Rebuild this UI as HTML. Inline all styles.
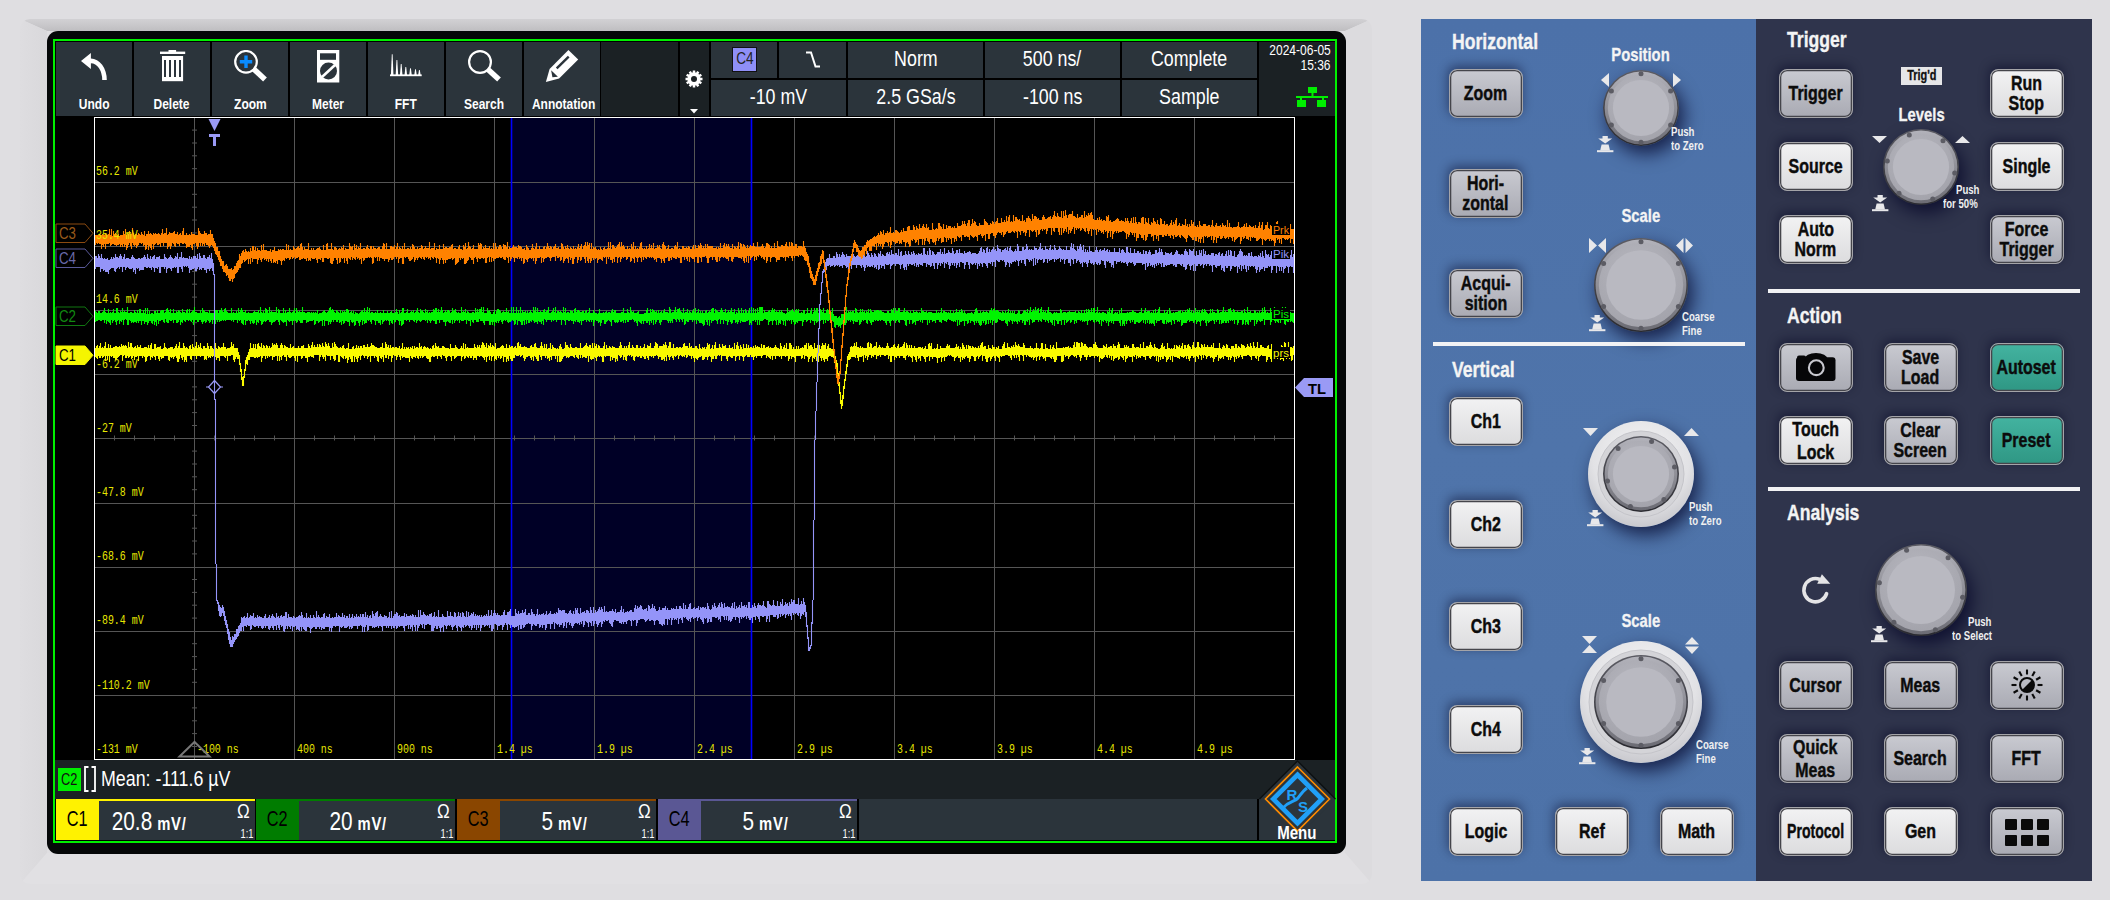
<!DOCTYPE html><html><head><meta charset="utf-8"><style>html,body{margin:0;padding:0;width:2110px;height:900px;overflow:hidden;background:#dfdee1;position:relative}*{box-sizing:border-box}</style></head><body>
<svg style="position:absolute;left:20px;top:19px" width="1352" height="865"><defs><linearGradient id="gt" x1="0" y1="0" x2="0" y2="1"><stop offset="0" stop-color="#d2d1d4"/><stop offset="1" stop-color="#bfbec1"/></linearGradient><linearGradient id="gl" x1="0" y1="0" x2="1" y2="0"><stop offset="0" stop-color="#dedde0"/><stop offset="1" stop-color="#d9d8db"/></linearGradient><clipPath id="fc"><rect width="1352" height="865" rx="10"/></clipPath></defs><g clip-path="url(#fc)"><path d="M0 0H1352L1325 12H27Z" fill="url(#gt)"/><path d="M0 0L27 12V834L0 865Z" fill="url(#gl)"/><path d="M1352 0L1325 12V834L1352 865Z" fill="#dcdbde"/><path d="M0 865L27 834H1325L1352 865Z" fill="#e1e0e3"/></g></svg>
<div style="position:absolute;left:47px;top:31px;width:1299px;height:823px;background:#050708;border-radius:11px;"></div>
<div style="position:absolute;left:53px;top:39px;width:1284px;height:804px;border:2px solid #00f000;background:#000"></div>
<div style="position:absolute;left:56px;top:42px;width:76px;height:74px;background:#2b343b;"></div>
<div style="position:absolute;left:56px;top:95px;width:76px;height:18px;text-align:center;font:bold 15px/18px 'Liberation Sans', sans-serif;color:#fff;white-space:nowrap;"><span style="display:inline-block;transform:scaleX(0.8);transform-origin:50% 50%">Undo</span></div>
<div style="position:absolute;left:134px;top:42px;width:76px;height:74px;background:#2b343b;"></div>
<div style="position:absolute;left:134px;top:95px;width:76px;height:18px;text-align:center;font:bold 15px/18px 'Liberation Sans', sans-serif;color:#fff;white-space:nowrap;"><span style="display:inline-block;transform:scaleX(0.8);transform-origin:50% 50%">Delete</span></div>
<div style="position:absolute;left:212px;top:42px;width:76px;height:74px;background:#2b343b;"></div>
<div style="position:absolute;left:212px;top:95px;width:76px;height:18px;text-align:center;font:bold 15px/18px 'Liberation Sans', sans-serif;color:#fff;white-space:nowrap;"><span style="display:inline-block;transform:scaleX(0.8);transform-origin:50% 50%">Zoom</span></div>
<div style="position:absolute;left:290px;top:42px;width:76px;height:74px;background:#2b343b;"></div>
<div style="position:absolute;left:290px;top:95px;width:76px;height:18px;text-align:center;font:bold 15px/18px 'Liberation Sans', sans-serif;color:#fff;white-space:nowrap;"><span style="display:inline-block;transform:scaleX(0.8);transform-origin:50% 50%">Meter</span></div>
<div style="position:absolute;left:368px;top:42px;width:76px;height:74px;background:#2b343b;"></div>
<div style="position:absolute;left:368px;top:95px;width:76px;height:18px;text-align:center;font:bold 15px/18px 'Liberation Sans', sans-serif;color:#fff;white-space:nowrap;"><span style="display:inline-block;transform:scaleX(0.8);transform-origin:50% 50%">FFT</span></div>
<div style="position:absolute;left:446px;top:42px;width:76px;height:74px;background:#2b343b;"></div>
<div style="position:absolute;left:446px;top:95px;width:76px;height:18px;text-align:center;font:bold 15px/18px 'Liberation Sans', sans-serif;color:#fff;white-space:nowrap;"><span style="display:inline-block;transform:scaleX(0.8);transform-origin:50% 50%">Search</span></div>
<div style="position:absolute;left:524px;top:42px;width:76px;height:74px;background:#2b343b;"></div>
<div style="position:absolute;left:524px;top:95px;width:76px;height:18px;text-align:center;font:bold 15px/18px 'Liberation Sans', sans-serif;color:#fff;white-space:nowrap;"><span style="display:inline-block;transform:scaleX(0.8);transform-origin:50% 50%">Annotation</span></div>
<div style="position:absolute;left:601px;top:42px;width:77px;height:74px;background:#1b2124;"></div>
<div style="position:absolute;left:680px;top:42px;width:29px;height:74px;background:#1b2124;"></div>
<div style="position:absolute;left:711px;top:42px;width:66px;height:36px;background:#2b343b;"></div>
<div style="position:absolute;left:732px;top:47px;width:25px;height:25px;background:#8f8ff7;border:1px solid #111;"></div>
<div style="position:absolute;left:732px;top:47px;width:25px;height:24px;text-align:center;font:normal 17px/24px 'Liberation Sans', sans-serif;color:#222;white-space:nowrap;"><span style="display:inline-block;transform:scaleX(0.8);transform-origin:50% 50%">C4</span></div>
<div style="position:absolute;left:779px;top:42px;width:67px;height:36px;background:#2b343b;"></div>
<svg style="position:absolute;left:805px;top:51px" width="16" height="18"><path d="M1 1.5H6L10.5 15.5H15" fill="none" stroke="#fff" stroke-width="2"/></svg>
<div style="position:absolute;left:848px;top:42px;width:135px;height:36px;background:#2b343b;"></div>
<div style="position:absolute;left:848px;top:45px;width:135px;height:28px;text-align:center;font:normal 22px/28px 'Liberation Sans', sans-serif;color:#fff;white-space:nowrap;"><span style="display:inline-block;transform:scaleX(0.81);transform-origin:50% 50%">Norm</span></div>
<div style="position:absolute;left:985px;top:42px;width:135px;height:36px;background:#2b343b;"></div>
<div style="position:absolute;left:985px;top:45px;width:135px;height:28px;text-align:center;font:normal 22px/28px 'Liberation Sans', sans-serif;color:#fff;white-space:nowrap;"><span style="display:inline-block;transform:scaleX(0.81);transform-origin:50% 50%">500 ns/</span></div>
<div style="position:absolute;left:1122px;top:42px;width:135px;height:36px;background:#2b343b;"></div>
<div style="position:absolute;left:1122px;top:45px;width:135px;height:28px;text-align:center;font:normal 22px/28px 'Liberation Sans', sans-serif;color:#fff;white-space:nowrap;"><span style="display:inline-block;transform:scaleX(0.81);transform-origin:50% 50%">Complete</span></div>
<div style="position:absolute;left:711px;top:80px;width:135px;height:36px;background:#2b343b;"></div>
<div style="position:absolute;left:711px;top:83px;width:135px;height:28px;text-align:center;font:normal 22px/28px 'Liberation Sans', sans-serif;color:#fff;white-space:nowrap;"><span style="display:inline-block;transform:scaleX(0.81);transform-origin:50% 50%">-10 mV</span></div>
<div style="position:absolute;left:848px;top:80px;width:135px;height:36px;background:#2b343b;"></div>
<div style="position:absolute;left:848px;top:83px;width:135px;height:28px;text-align:center;font:normal 22px/28px 'Liberation Sans', sans-serif;color:#fff;white-space:nowrap;"><span style="display:inline-block;transform:scaleX(0.81);transform-origin:50% 50%">2.5 GSa/s</span></div>
<div style="position:absolute;left:985px;top:80px;width:135px;height:36px;background:#2b343b;"></div>
<div style="position:absolute;left:985px;top:83px;width:135px;height:28px;text-align:center;font:normal 22px/28px 'Liberation Sans', sans-serif;color:#fff;white-space:nowrap;"><span style="display:inline-block;transform:scaleX(0.81);transform-origin:50% 50%">-100 ns</span></div>
<div style="position:absolute;left:1122px;top:80px;width:135px;height:36px;background:#2b343b;"></div>
<div style="position:absolute;left:1122px;top:83px;width:135px;height:28px;text-align:center;font:normal 22px/28px 'Liberation Sans', sans-serif;color:#fff;white-space:nowrap;"><span style="display:inline-block;transform:scaleX(0.81);transform-origin:50% 50%">Sample</span></div>
<div style="position:absolute;left:1259px;top:42px;width:76px;height:74px;background:#1b2124;"></div>
<div style="position:absolute;right:779px;top:41px;font:normal 15px/18px 'Liberation Sans', sans-serif;color:#fff;white-space:nowrap;transform:scaleX(0.8);transform-origin:100% 50%;">2024-06-05</div>
<div style="position:absolute;right:779px;top:56px;font:normal 15px/18px 'Liberation Sans', sans-serif;color:#fff;white-space:nowrap;transform:scaleX(0.8);transform-origin:100% 50%;">15:36</div>
<svg style="position:absolute;left:1296px;top:87px" width="33" height="21"><g fill="#00ee00"><rect x="12" y="0" width="9" height="6"/><rect x="15.5" y="5" width="2" height="5"/><rect x="0" y="9" width="32" height="2"/><rect x="4" y="10" width="2" height="4"/><rect x="26" y="10" width="2" height="4"/><rect x="1" y="13" width="9" height="7"/><rect x="21" y="13" width="9" height="7"/></g></svg>
<svg style="position:absolute;left:685.4px;top:69.8px" width="18" height="18" viewBox="-9 -9 18 18"><g fill="#fff"><circle r="6.7"/><rect x="-1.25" y="-8.5" width="2.5" height="3.5" transform="rotate(0)"/><rect x="-1.25" y="-8.5" width="2.5" height="3.5" transform="rotate(30)"/><rect x="-1.25" y="-8.5" width="2.5" height="3.5" transform="rotate(60)"/><rect x="-1.25" y="-8.5" width="2.5" height="3.5" transform="rotate(90)"/><rect x="-1.25" y="-8.5" width="2.5" height="3.5" transform="rotate(120)"/><rect x="-1.25" y="-8.5" width="2.5" height="3.5" transform="rotate(150)"/><rect x="-1.25" y="-8.5" width="2.5" height="3.5" transform="rotate(180)"/><rect x="-1.25" y="-8.5" width="2.5" height="3.5" transform="rotate(210)"/><rect x="-1.25" y="-8.5" width="2.5" height="3.5" transform="rotate(240)"/><rect x="-1.25" y="-8.5" width="2.5" height="3.5" transform="rotate(270)"/><rect x="-1.25" y="-8.5" width="2.5" height="3.5" transform="rotate(300)"/><rect x="-1.25" y="-8.5" width="2.5" height="3.5" transform="rotate(330)"/></g><circle r="3" fill="#1b2124"/></svg>
<svg style="position:absolute;left:690.4px;top:108.6px" width="9" height="5"><path d="M0 0H8L4 4.6Z" fill="#fff"/></svg>
<svg style="position:absolute;left:80px;top:52px" width="30" height="30"><path d="M1 9L10.9 1V6.6A15.9 21.4 0 0 1 26.8 28L22.2 28A11.3 16.8 0 0 0 10.9 11.2V16.9Z" fill="#fff"/></svg>
<svg style="position:absolute;left:159px;top:49px" width="28" height="34"><rect x="1" y="2.6" width="25.2" height="2.4" fill="#fff"/><rect x="9.5" y="1" width="7.6" height="2.5" fill="#fff"/><path d="M3 7H24.1V32.2H3Z" fill="#fff"/><g fill="#2b343b"><rect x="5" y="11" width="2" height="17"/><rect x="10" y="11" width="2" height="17"/><rect x="15" y="11" width="2" height="17"/><rect x="20" y="11" width="2" height="17"/></g></svg>
<svg style="position:absolute;left:234px;top:50px" width="34" height="34"><circle cx="12" cy="11.8" r="10.8" fill="none" stroke="#fff" stroke-width="2.2"/><path d="M19.5 18.8L31 29.5" stroke="#fff" stroke-width="5.5"/><path d="M12 5.6V18M5.8 11.8H18.2" stroke="#0a8cff" stroke-width="3.4"/></svg>
<svg style="position:absolute;left:317px;top:50px" width="24" height="33"><path d="M0 0H22.3V32.5H0Z" fill="#fff"/><rect x="3" y="3.3" width="16" height="6.5" fill="#2b343b"/><circle cx="11.5" cy="21" r="8.5" fill="#2b343b"/><path d="M5 27L18 15" stroke="#fff" stroke-width="2.6"/></svg>
<svg style="position:absolute;left:388px;top:50px" width="36" height="28"><g fill="#fff"><path d="M2.9 25.5L3.8 4.3H4.6L5.5 25.5Z"/><path d="M7.6 25.5L8.5 9.9H9.3L10.2 25.5Z"/><path d="M11.9 25.5L12.8 13.9H13.6L14.5 25.5Z"/><path d="M16.5 25.5L17.4 16.9H18.2L19.1 25.5Z"/><path d="M21.2 25.5L22.1 18.2H22.9L23.8 25.5Z"/><path d="M26.2 25.5L27.1 19.2H27.9L28.8 25.5Z"/><path d="M30.1 25.5L31.0 19.9H31.8L32.7 25.5Z"/><rect x="2" y="24.4" width="31.7" height="1.8"/></g></svg>
<svg style="position:absolute;left:468px;top:50px" width="34" height="34"><circle cx="12" cy="12" r="10.9" fill="none" stroke="#fff" stroke-width="2.2"/><path d="M19.5 19L31 29.5" stroke="#fff" stroke-width="5.5"/></svg>
<svg style="position:absolute;left:545px;top:49px" width="35" height="35"><path d="M0.9 33L4.6 20L23.4 0.9L33.2 10.5L14.1 29.6Z" fill="#fff"/><path d="M11.7 19.4L23.7 7.7" stroke="#2b343b" stroke-width="2.4"/><path d="M6.1 21.3L12.9 27.7L7.4 28.3Z" fill="#2b343b"/></svg>
<svg style="position:absolute;left:0;top:0" width="2110" height="900" viewBox="0 0 2110 900">
<defs><clipPath id="pc"><rect x="95" y="118" width="1199" height="641"/></clipPath></defs>
<rect x="511" y="118" width="240" height="641" fill="#000026"/>
<path d="M194.5 118V759M294.5 118V759M394.5 118V759M494.5 118V759M594.5 118V759M694.5 118V759M794.5 118V759M894.5 118V759M994.5 118V759M1094.5 118V759M1194.5 118V759M95 182.5H1294M95 246.5H1294M95 310.5H1294M95 374.5H1294M95 438.5H1294M95 503.5H1294M95 567.5H1294M95 631.5H1294M95 695.5H1294M192 130.1H197M192 143.0H197M192 155.8H197M192 168.7H197M192 194.3H197M192 207.2H197M192 220.0H197M192 232.9H197M192 258.5H197M192 271.4H197M192 284.2H197M192 297.1H197M192 322.7H197M192 335.6H197M192 348.4H197M192 361.3H197M192 386.9H197M192 399.8H197M192 412.6H197M192 425.5H197M192 451.1H197M192 464.0H197M192 476.8H197M192 489.7H197M192 515.3H197M192 528.2H197M192 541.0H197M192 553.9H197M192 579.5H197M192 592.4H197M192 605.2H197M192 618.1H197M192 643.7H197M192 656.6H197M192 669.4H197M192 682.3H197M192 707.9H197M192 720.8H197M192 733.6H197M192 746.5H197M114.5 435.5V440.5M134.5 435.5V440.5M154.5 435.5V440.5M174.5 435.5V440.5M214.5 435.5V440.5M234.5 435.5V440.5M254.5 435.5V440.5M274.5 435.5V440.5M314.5 435.5V440.5M334.5 435.5V440.5M354.5 435.5V440.5M374.5 435.5V440.5M414.5 435.5V440.5M434.5 435.5V440.5M454.5 435.5V440.5M474.5 435.5V440.5M514.5 435.5V440.5M534.5 435.5V440.5M554.5 435.5V440.5M574.5 435.5V440.5M614.5 435.5V440.5M634.5 435.5V440.5M654.5 435.5V440.5M674.5 435.5V440.5M714.5 435.5V440.5M734.5 435.5V440.5M754.5 435.5V440.5M774.5 435.5V440.5M814.5 435.5V440.5M834.5 435.5V440.5M854.5 435.5V440.5M874.5 435.5V440.5M914.5 435.5V440.5M934.5 435.5V440.5M954.5 435.5V440.5M974.5 435.5V440.5M1014.5 435.5V440.5M1034.5 435.5V440.5M1054.5 435.5V440.5M1074.5 435.5V440.5M1114.5 435.5V440.5M1134.5 435.5V440.5M1154.5 435.5V440.5M1174.5 435.5V440.5M1214.5 435.5V440.5M1234.5 435.5V440.5M1254.5 435.5V440.5M1274.5 435.5V440.5" stroke="#555555" stroke-width="1" fill="none"/>
<path d="M511.5 118V759M751.5 118V759" stroke="#0000ff" stroke-width="1.6"/>
<rect x="94.5" y="117.5" width="1200" height="642" fill="none" stroke="#fff" stroke-width="1"/>
<g clip-path="url(#pc)">
<path d="M95.5 348v9m1 -11v12m1 -13v14m1 -11v8m1 -10v12m1 -15v15m1 -10v8m1 -9v11m1 -10v9m1 -11v10m1 -14v19m1 -13v8m1 -8v12m1 -16v12m1 -8v14m1 -17v11m1 -8v9m1 -9v8m1 -9v11m1 -11v11m1 -12v14m1 -14v14m1 -13v11m1 -11v10m1 -11v10m1 -9v8m1 -11v11m1 -9v15m1 -16v11m1 -10v9m1 -10v13m1 -12v12m1 -10v8m1 -14v16m1 -11v10m1 -14v13m1 -13v16m1 -12v11m1 -10v8m1 -9v13m1 -14v11m1 -9v9m1 -12v11m1 -9v14m1 -14v9m1 -11v11m1 -8v8m1 -8v10m1 -10v8m1 -9v10m1 -10v15m1 -15v14m1 -13v9m1 -12v11m1 -8v8m1 -11v15m1 -17v14m1 -8v9m1 -9v7m1 -12v13m1 -13v16m1 -12v8m1 -9v9m1 -9v12m1 -12v14m1 -15v11m1 -8v10m1 -10v9m1 -10v10m1 -15v13m1 -9v9m1 -8v8m1 -7v7m1 -8v12m1 -12v13m1 -14v10m1 -10v11m1 -11v10m1 -8v10m1 -11v9m1 -11v10m1 -12v14m1 -10v14m1 -16v16m1 -20v17m1 -11v7m1 -7v10m1 -10v12m1 -17v14m1 -11v16m1 -14v12m1 -13v15m1 -14v8m1 -7v7m1 -10v10m1 -11v14m1 -10v11m1 -16v12m1 -9v9m1 -8v8m1 -10v10m1 -14v17m1 -11v8m1 -11v11m1 -9v9m1 -13v14m1 -9v8m1 -7v7m1 -10v10m1 -10v14m1 -12v11m1 -11v12m1 -17v13m1 -10v12m1 -9v8m1 -11v12m1 -12v10m1 -8v9m1 -8v7m1 -9v9m1 -13v14m1 -9v12m1 -11v9m1 -12v12m1 -11v14m1 -13v8m1 -9v9m1 -9v9m1 -13v13m1 -9v10m1 -10v11m1 -9v7m1 -8v13m1 -13v8m1 -8v8m1 -9v9m1 -14v13m1 -9v9m1 -11v16m1 -12v14m1 -14v11m1 -11v9m1 -9v11m1 -7v7m1 -4v10m1 -2v9m1 -3v11m1 -3v9m1 -10v10m1 -17v9m1 -18v11m1 -14v7m1 -9v10m1 -13v8m1 -11v11m1 -17v14m1 -9v9m1 -9v9m1 -13v13m1 -9v10m1 -14v14m1 -9v8m1 -13v14m1 -15v14m1 -11v11m1 -10v9m1 -13v19m1 -14v10m1 -13v11m1 -10v10m1 -8v11m1 -14v11m1 -10v12m1 -10v8m1 -10v11m1 -9v8m1 -9v9m1 -13v17m1 -15v12m1 -13v13m1 -12v11m1 -13v13m1 -11v16m1 -13v8m1 -8v13m1 -16v12m1 -14v17m1 -15v11m1 -8v7m1 -10v12m1 -11v11m1 -10v14m1 -14v8m1 -7v9m1 -9v10m1 -14v14m1 -10v9m1 -10v9m1 -10v10m1 -8v10m1 -10v13m1 -13v8m1 -8v14m1 -16v10m1 -8v8m1 -8v8m1 -10v13m1 -13v12m1 -13v11m1 -8v8m1 -8v10m1 -10v10m1 -10v14m1 -18v13m1 -11v11m1 -9v8m1 -11v12m1 -15v15m1 -10v11m1 -13v10m1 -8v8m1 -8v8m1 -11v11m1 -8v8m1 -11v17m1 -16v12m1 -10v8m1 -12v14m1 -11v13m1 -12v10m1 -15v19m1 -17v11m1 -9v10m1 -13v13m1 -10v10m1 -8v12m1 -12v8m1 -13v13m1 -9v12m1 -17v19m1 -17v16m1 -14v9m1 -8v8m1 -7v14m1 -14v14m1 -15v9m1 -8v9m1 -11v12m1 -13v14m1 -11v8m1 -7v10m1 -11v10m1 -10v15m1 -20v17m1 -11v8m1 -8v10m1 -10v13m1 -15v15m1 -16v10m1 -7v13m1 -14v9m1 -12v14m1 -11v14m1 -16v12m1 -10v8m1 -10v14m1 -14v10m1 -8v7m1 -10v11m1 -11v13m1 -11v9m1 -9v9m1 -12v15m1 -12v10m1 -10v9m1 -10v16m1 -19v13m1 -11v11m1 -11v11m1 -10v12m1 -11v9m1 -9v10m1 -9v13m1 -13v14m1 -14v8m1 -9v11m1 -11v12m1 -16v14m1 -9v14m1 -14v7m1 -13v16m1 -14v14m1 -11v8m1 -10v14m1 -11v8m1 -11v11m1 -8v14m1 -15v11m1 -11v8m1 -7v8m1 -9v9m1 -9v13m1 -12v9m1 -9v7m1 -9v11m1 -8v11m1 -12v8m1 -13v15m1 -9v8m1 -10v10m1 -8v9m1 -11v11m1 -10v10m1 -11v11m1 -9v13m1 -15v9m1 -8v10m1 -12v13m1 -10v8m1 -11v11m1 -9v10m1 -11v9m1 -9v11m1 -10v11m1 -16v13m1 -9v11m1 -12v10m1 -7v9m1 -11v10m1 -11v10m1 -9v9m1 -8v10m1 -11v12m1 -11v11m1 -10v13m1 -14v14m1 -13v8m1 -11v10m1 -11v12m1 -9v9m1 -14v13m1 -10v10m1 -9v12m1 -13v10m1 -8v8m1 -8v9m1 -9v11m1 -13v9m1 -9v10m1 -9v9m1 -8v10m1 -10v13m1 -13v9m1 -9v8m1 -7v7m1 -12v13m1 -9v13m1 -13v8m1 -8v8m1 -8v11m1 -14v13m1 -11v10m1 -9v8m1 -7v7m1 -7v7m1 -8v8m1 -10v15m1 -13v9m1 -14v13m1 -7v10m1 -15v14m1 -10v8m1 -9v10m1 -9v10m1 -10v8m1 -8v10m1 -10v10m1 -10v8m1 -8v12m1 -16v14m1 -11v11m1 -10v12m1 -15v11m1 -9v9m1 -11v12m1 -9v8m1 -11v11m1 -14v15m1 -14v15m1 -13v15m1 -13v10m1 -14v19m1 -14v9m1 -12v11m1 -10v14m1 -17v13m1 -9v14m1 -16v12m1 -11v10m1 -9v14m1 -18v16m1 -10v11m1 -12v8m1 -8v10m1 -10v8m1 -9v12m1 -13v12m1 -13v11m1 -10v16m1 -14v9m1 -9v9m1 -13v18m1 -14v11m1 -11v13m1 -16v11m1 -9v12m1 -13v15m1 -15v15m1 -13v10m1 -11v11m1 -12v9m1 -7v8m1 -13v13m1 -14v14m1 -10v9m1 -11v13m1 -10v9m1 -9v8m1 -8v11m1 -12v15m1 -14v12m1 -12v10m1 -9v9m1 -9v8m1 -8v8m1 -10v12m1 -13v15m1 -13v10m1 -10v14m1 -17v12m1 -13v14m1 -10v12m1 -11v13m1 -13v13m1 -13v7m1 -9v11m1 -15v18m1 -14v10m1 -8v8m1 -12v12m1 -8v10m1 -14v12m1 -7v10m1 -11v10m1 -10v13m1 -18v14m1 -8v11m1 -15v11m1 -9v9m1 -8v8m1 -8v11m1 -10v7m1 -8v14m1 -13v7m1 -10v16m1 -18v18m1 -15v14m1 -12v10m1 -10v8m1 -9v8m1 -14v14m1 -11v13m1 -13v12m1 -10v11m1 -10v9m1 -13v12m1 -9v9m1 -8v8m1 -8v9m1 -9v10m1 -11v8m1 -8v10m1 -9v10m1 -10v11m1 -11v7m1 -12v15m1 -10v7m1 -7v10m1 -11v10m1 -11v11m1 -12v13m1 -15v15m1 -12v10m1 -9v15m1 -17v11m1 -11v14m1 -11v12m1 -17v16m1 -11v11m1 -16v14m1 -11v12m1 -14v17m1 -13v9m1 -12v11m1 -10v11m1 -9v8m1 -8v9m1 -9v14m1 -16v16m1 -20v14m1 -7v8m1 -12v11m1 -8v8m1 -8v8m1 -10v10m1 -9v14m1 -13v9m1 -11v14m1 -13v11m1 -11v11m1 -10v14m1 -14v11m1 -11v13m1 -13v7m1 -9v10m1 -14v16m1 -13v12m1 -9v7m1 -7v12m1 -14v11m1 -9v12m1 -14v15m1 -13v8m1 -11v10m1 -13v14m1 -8v7m1 -7v9m1 -12v11m1 -9v13m1 -12v13m1 -13v9m1 -12v11m1 -11v12m1 -9v9m1 -9v8m1 -10v12m1 -10v10m1 -10v8m1 -9v10m1 -13v15m1 -11v11m1 -11v8m1 -11v13m1 -12v14m1 -14v10m1 -13v13m1 -8v9m1 -9v8m1 -8v10m1 -12v10m1 -14v14m1 -13v12m1 -11v12m1 -8v11m1 -13v11m1 -11v11m1 -11v14m1 -14v14m1 -16v15m1 -14v16m1 -19v15m1 -12v16m1 -13v7m1 -9v11m1 -15v18m1 -18v15m1 -9v8m1 -8v10m1 -14v16m1 -12v8m1 -8v9m1 -10v9m1 -9v8m1 -7v11m1 -12v9m1 -9v8m1 -7v8m1 -9v10m1 -13v12m1 -13v14m1 -11v9m1 -9v12m1 -12v11m1 -9v7m1 -12v13m1 -9v9m1 -10v13m1 -11v8m1 -8v10m1 -10v14m1 -16v12m1 -12v13m1 -11v12m1 -11v9m1 -14v13m1 -9v9m1 -8v7m1 -9v13m1 -12v12m1 -13v12m1 -10v8m1 -10v10m1 -14v17m1 -15v12m1 -13v12m1 -7v8m1 -9v14m1 -17v14m1 -10v10m1 -14v11m1 -14v17m1 -11v11m1 -11v8m1 -8v7m1 -11v12m1 -9v8m1 -7v13m1 -17v12m1 -10v10m1 -10v10m1 -11v11m1 -8v11m1 -11v13m1 -13v9m1 -12v11m1 -8v9m1 -9v10m1 -11v11m1 -9v7m1 -13v13m1 -7v12m1 -16v12m1 -15v14m1 -10v10m1 -7v11m1 -15v11m1 -9v9m1 -7v8m1 -13v17m1 -13v9m1 -9v8m1 -12v11m1 -7v9m1 -12v12m1 -9v9m1 -10v8m1 -8v10m1 -9v9m1 -11v14m1 -12v9m1 -12v11m1 -9v11m1 -12v10m1 -9v9m1 -9v9m1 -8v8m1 -12v14m1 -10v8m1 -11v10m1 -10v10m1 -7v7m1 -8v11m1 -11v9m1 -10v11m1 -9v10m1 -11v12m1 -11v8m1 -8v12m1 -12v8m1 -9v9m1 -11v14m1 -12v9m1 -8v8m1 -8v8m1 -7v8m1 -14v13m1 -10v13m1 -10v7m1 -9v9m1 -11v11m1 -8v9m1 -14v13m1 -7v7m1 -7v12m1 -18v16m1 -16v13m1 -11v14m1 -10v8m1 -10v10m1 -8v9m1 -9v13m1 -16v10m1 -7v7m1 -10v10m1 -7v7m1 -8v8m1 -8v11m1 -12v11m1 -10v7m1 -10v14m1 -14v11m1 -13v13m1 -7v8m1 -14v19m1 -16v13m1 -14v12m1 -12v11m1 -9v15m1 -13v9m1 -15v16m1 -11v9m1 -9v13m1 -16v12m1 -14v19m1 -17v11m1 -7v9m1 -12v15m1 -18v15m1 -13v15m1 -15v17m1 -19v16m1 -10v10m1 -13v15m1 -17v13m1 -9v8m1 -8v8m1 -7v8m1 -8v8m1 -7v8m1 -8v13m1 -7v8m1 -4v8m1 -5v13m1 -3v13m1 -4v12m1 -2v12m1 -4v9m1 -14v11m1 -20v13m1 -20v10m1 -18v10m1 -17v10m1 -18v11m1 -13v6m1 -8v8m1 -13v12m1 -13v11m1 -10v10m1 -11v11m1 -14v14m1 -11v12m1 -16v13m1 -8v11m1 -11v14m1 -13v9m1 -11v11m1 -9v9m1 -10v9m1 -8v14m1 -14v7m1 -7v10m1 -10v8m1 -13v17m1 -18v15m1 -10v8m1 -12v12m1 -11v14m1 -10v8m1 -9v10m1 -11v9m1 -9v9m1 -13v17m1 -11v8m1 -9v9m1 -11v10m1 -8v10m1 -9v7m1 -8v8m1 -7v7m1 -7v8m1 -8v8m1 -10v9m1 -12v12m1 -9v13m1 -11v8m1 -8v14m1 -15v15m1 -15v9m1 -11v11m1 -12v16m1 -13v10m1 -9v10m1 -12v10m1 -12v12m1 -8v10m1 -11v9m1 -9v9m1 -10v10m1 -12v14m1 -16v16m1 -10v12m1 -17v13m1 -11v10m1 -7v9m1 -12v11m1 -8v9m1 -12v13m1 -10v14m1 -14v8m1 -10v11m1 -9v12m1 -12v14m1 -14v8m1 -9v12m1 -12v11m1 -11v14m1 -13v8m1 -9v9m1 -7v8m1 -9v11m1 -13v16m1 -13v8m1 -8v8m1 -13v12m1 -13v18m1 -15v11m1 -14v14m1 -8v10m1 -10v8m1 -9v9m1 -8v8m1 -9v10m1 -14v19m1 -14v9m1 -9v9m1 -12v11m1 -9v14m1 -14v10m1 -10v9m1 -9v13m1 -13v9m1 -11v11m1 -13v12m1 -10v9m1 -10v11m1 -8v7m1 -7v8m1 -8v9m1 -9v9m1 -9v13m1 -14v11m1 -14v13m1 -10v9m1 -10v12m1 -9v9m1 -11v15m1 -13v8m1 -14v17m1 -15v13m1 -11v12m1 -10v8m1 -12v11m1 -7v9m1 -13v13m1 -12v16m1 -16v13m1 -11v8m1 -10v10m1 -9v10m1 -9v13m1 -14v14m1 -13v9m1 -9v8m1 -10v13m1 -11v9m1 -12v11m1 -13v12m1 -13v19m1 -14v9m1 -10v10m1 -10v13m1 -10v13m1 -13v13m1 -17v13m1 -10v9m1 -9v13m1 -12v10m1 -14v12m1 -10v9m1 -9v11m1 -9v12m1 -14v9m1 -8v9m1 -11v12m1 -9v13m1 -13v7m1 -7v8m1 -11v10m1 -12v12m1 -14v14m1 -8v7m1 -7v7m1 -12v12m1 -8v9m1 -9v9m1 -8v10m1 -12v14m1 -13v8m1 -10v11m1 -9v11m1 -16v13m1 -10v13m1 -12v9m1 -11v13m1 -11v15m1 -14v8m1 -8v8m1 -8v9m1 -13v18m1 -16v10m1 -7v7m1 -7v9m1 -9v7m1 -7v8m1 -8v9m1 -11v11m1 -9v10m1 -10v9m1 -8v11m1 -12v10m1 -10v9m1 -14v18m1 -13v9m1 -9v8m1 -7v11m1 -12v9m1 -14v13m1 -13v14m1 -8v10m1 -10v9m1 -14v17m1 -13v9m1 -9v9m1 -8v8m1 -8v8m1 -12v13m1 -9v10m1 -12v10m1 -12v14m1 -11v14m1 -13v13m1 -20v18m1 -12v8m1 -8v8m1 -8v8m1 -8v8m1 -8v14m1 -14v14m1 -15v14m1 -13v7m1 -8v10m1 -10v9m1 -9v9m1 -10v13m1 -11v9m1 -10v9m1 -8v7m1 -7v7m1 -10v11m1 -14v15m1 -10v9m1 -14v16m1 -16v13m1 -12v12m1 -12v14m1 -10v14m1 -19v16m1 -15v12m1 -9v9m1 -11v13m1 -13v13m1 -11v14m1 -13v10m1 -9v7m1 -8v10m1 -10v10m1 -10v9m1 -8v8m1 -12v12m1 -12v14m1 -16v14m1 -11v11m1 -9v10m1 -9v8m1 -8v14m1 -14v10m1 -10v11m1 -11v11m1 -14v13m1 -12v11m1 -10v8m1 -11v13m1 -9v10m1 -11v8m1 -8v11m1 -12v10m1 -10v14m1 -12v8m1 -12v17m1 -15v13m1 -13v12m1 -10v10m1 -13v12m1 -15v18m1 -16v15m1 -11v8m1 -8v9m1 -9v10m1 -10v12m1 -15v11m1 -9v15m1 -17v14m1 -12v11m1 -12v10m1 -8v9m1 -9v9m1 -9v9m1 -13v18m1 -18v12m1 -9v10m1 -9v7m1 -8v12m1 -12v9m1 -9v11m1 -10v9m1 -13v14m1 -10v8m1 -8v8m1 -14v15m1 -9v9m1 -9v12m1 -14v10m1 -10v10m1 -9v9m1 -11v13m1 -16v17m1 -14v12m1 -10v9m1 -8v8m1 -12v13m1 -10v9m1 -8v13m1 -13v8m1 -7v13m1 -13v8m1 -9v12m1 -15v12m1 -14v16m1 -12v12m1 -13v10m1 -7v8m1 -8v13m1 -19v17m1 -12v11m1 -11v9m1 -8v11m1 -12v8m1 -7v13m1 -14v8m1 -11v12m1 -8v8m1 -12v12m1 -11v12m1 -11v11m1 -13v14m1 -11v8m1 -10v11m1 -14v14m1 -8v9m1 -13v12m1 -12v11m1 -8v11m1 -14v11m1 -12v15m1 -13v15m1 -14v11m1 -9v7m1 -11v11m1 -14v16m1 -11v10m1 -9v14m1 -15v9m1 -14v15m1 -15v17m1 -12v8m1 -7v8m1 -12v16m1 -15v10m1 -8v11m1 -14v11m1 -8v9m1 -9v12m1 -14v12m1 -10v9m1 -9v9m1 -9v11m1 -13v12m1 -10v11m1 -15v19m1 -14v11m1 -11v9m1 -9v9m1 -9v7m1 -7v13m1 -18v15m1 -10v11m1 -10v9m1 -11v10m1 -12v14m1 -13v10m1 -8v8m1 -12v13m1 -12v12m1 -9v12m1 -12v9m1 -8v11m1 -14v12m1 -12v10m1 -10v11m1 -9v14m1 -18v13m1 -13v15m1 -11v8m1 -10v12m1 -11v10m1 -9v7m1 -11v13m1 -12v14m1 -14v11m1 -10v10m1 -8v8m1 -9v9m1 -12v11m1 -9v9m1 -8v9m1 -13v14m1 -11v14m1 -12v8m1 -14v14m1 -10v10m1 -8v10m1 -11v12m1 -17v14m1 -8v13m1 -13v9m1 -12v11m1 -11v10m1 -8v9m1 -9v9m1 -8v8m1 -8v8m1 -8v14m1 -16v14m1 -15v12m1 -8v8m1 -8v10m1 -15v18m1 -13v7m1 -8v10m1 -11v9m1 -8v9m1 -9v8m1 -9v12m1 -11v8m1 -7v7m1 -9v13m1 -15v14m1 -13v13m1 -11v13m1 -19v13m1 -12v12m1 -8v12m1 -12v9m1 -14v15m1 -10v12m1 -12v9m1 -9v14m1 -13v12m1 -14v9" stroke="#fafa00" stroke-width="1.08" fill="none"/>
<path d="M95.5 311v11m1 -10v9m1 -8v8m1 -10v9m1 -9v9m1 -7v8m1 -8v8m1 -9v8m1 -9v9m1 -12v15m1 -11v8m1 -7v11m1 -11v8m1 -12v13m1 -9v10m1 -11v13m1 -12v7m1 -8v11m1 -14v12m1 -8v7m1 -7v9m1 -14v17m1 -17v13m1 -9v8m1 -7v11m1 -13v10m1 -9v10m1 -14v12m1 -8v13m1 -14v9m1 -8v7m1 -7v8m1 -13v18m1 -12v12m1 -12v7m1 -8v9m1 -9v11m1 -10v9m1 -9v10m1 -13v12m1 -10v10m1 -9v10m1 -13v11m1 -8v10m1 -14v12m1 -12v12m1 -8v12m1 -12v8m1 -11v11m1 -8v11m1 -16v14m1 -8v8m1 -14v17m1 -11v9m1 -12v10m1 -7v7m1 -8v10m1 -10v11m1 -10v7m1 -10v14m1 -14v11m1 -9v13m1 -16v10m1 -7v11m1 -11v8m1 -10v10m1 -11v10m1 -10v10m1 -10v12m1 -9v10m1 -11v7m1 -10v13m1 -14v15m1 -13v13m1 -11v8m1 -11v12m1 -8v8m1 -8v7m1 -11v14m1 -10v7m1 -7v7m1 -9v12m1 -11v11m1 -13v12m1 -11v9m1 -8v13m1 -12v9m1 -13v14m1 -11v8m1 -8v9m1 -8v9m1 -12v10m1 -11v11m1 -7v8m1 -12v11m1 -7v8m1 -9v10m1 -11v9m1 -10v15m1 -18v15m1 -10v8m1 -8v8m1 -7v9m1 -9v9m1 -9v7m1 -10v10m1 -7v9m1 -14v16m1 -14v12m1 -11v10m1 -9v11m1 -11v10m1 -10v8m1 -7v8m1 -11v13m1 -10v9m1 -9v7m1 -7v11m1 -11v7m1 -9v12m1 -13v14m1 -14v10m1 -10v12m1 -9v7m1 -10v12m1 -12v11m1 -13v13m1 -10v9m1 -8v9m1 -12v11m1 -12v13m1 -10v9m1 -8v8m1 -7v7m1 -7v7m1 -7v7m1 -12v13m1 -8v7m1 -8v10m1 -9v7m1 -7v7m1 -9v9m1 -7v10m1 -15v12m1 -8v9m1 -11v10m1 -12v15m1 -13v14m1 -12v13m1 -13v8m1 -10v15m1 -12v8m1 -8v8m1 -9v8m1 -7v8m1 -8v11m1 -11v8m1 -8v10m1 -11v12m1 -13v12m1 -11v8m1 -8v13m1 -13v10m1 -12v13m1 -10v7m1 -13v14m1 -9v13m1 -12v11m1 -13v11m1 -9v8m1 -13v14m1 -13v12m1 -11v10m1 -7v7m1 -13v15m1 -10v10m1 -11v14m1 -13v11m1 -11v10m1 -10v10m1 -10v9m1 -14v13m1 -7v7m1 -11v13m1 -12v15m1 -12v7m1 -7v8m1 -8v9m1 -14v15m1 -10v9m1 -12v12m1 -9v13m1 -14v8m1 -8v9m1 -13v14m1 -10v9m1 -8v8m1 -9v13m1 -14v10m1 -13v12m1 -7v8m1 -13v15m1 -12v11m1 -10v8m1 -9v10m1 -9v11m1 -11v11m1 -16v16m1 -11v8m1 -8v8m1 -7v7m1 -7v10m1 -11v10m1 -10v10m1 -10v9m1 -8v8m1 -9v9m1 -8v8m1 -9v8m1 -7v12m1 -13v12m1 -11v8m1 -11v11m1 -7v9m1 -10v9m1 -9v8m1 -8v8m1 -9v14m1 -15v9m1 -10v16m1 -14v9m1 -8v8m1 -9v9m1 -10v14m1 -17v14m1 -15v17m1 -14v12m1 -13v11m1 -10v12m1 -10v8m1 -7v7m1 -10v12m1 -11v11m1 -10v8m1 -7v10m1 -13v12m1 -9v12m1 -14v10m1 -9v12m1 -13v12m1 -11v9m1 -12v12m1 -12v13m1 -12v12m1 -9v13m1 -14v8m1 -9v11m1 -9v10m1 -12v11m1 -8v12m1 -14v13m1 -12v8m1 -8v8m1 -7v9m1 -10v13m1 -14v10m1 -11v9m1 -10v15m1 -13v9m1 -13v16m1 -12v11m1 -12v12m1 -16v13m1 -8v9m1 -13v12m1 -7v9m1 -10v12m1 -12v8m1 -7v7m1 -7v8m1 -9v13m1 -12v8m1 -11v11m1 -8v10m1 -10v10m1 -11v13m1 -12v7m1 -7v11m1 -14v12m1 -9v8m1 -8v7m1 -7v8m1 -10v9m1 -7v8m1 -8v12m1 -13v9m1 -10v12m1 -10v11m1 -11v7m1 -7v10m1 -11v10m1 -13v11m1 -8v8m1 -6v7m1 -11v15m1 -12v8m1 -9v14m1 -18v17m1 -17v16m1 -11v7m1 -7v7m1 -8v9m1 -12v11m1 -7v7m1 -7v9m1 -10v8m1 -9v9m1 -8v8m1 -10v11m1 -8v9m1 -10v8m1 -9v12m1 -15v13m1 -9v8m1 -7v8m1 -12v13m1 -11v10m1 -11v10m1 -8v8m1 -7v7m1 -11v12m1 -9v8m1 -10v13m1 -10v7m1 -8v9m1 -8v10m1 -11v9m1 -9v8m1 -11v12m1 -11v11m1 -13v16m1 -16v16m1 -12v8m1 -11v11m1 -8v11m1 -12v9m1 -13v13m1 -10v10m1 -7v9m1 -10v10m1 -12v16m1 -14v10m1 -12v11m1 -11v12m1 -11v12m1 -10v10m1 -11v8m1 -12v16m1 -13v9m1 -10v13m1 -14v12m1 -9v8m1 -7v8m1 -9v8m1 -7v10m1 -10v7m1 -13v14m1 -9v9m1 -10v10m1 -9v8m1 -11v11m1 -7v11m1 -13v9m1 -8v9m1 -8v8m1 -8v13m1 -13v7m1 -8v10m1 -10v11m1 -10v7m1 -12v12m1 -8v10m1 -13v13m1 -10v10m1 -13v10m1 -10v12m1 -14v14m1 -9v9m1 -14v16m1 -10v12m1 -12v8m1 -8v8m1 -13v13m1 -10v10m1 -11v15m1 -13v13m1 -11v8m1 -8v11m1 -13v10m1 -12v16m1 -12v8m1 -11v12m1 -14v12m1 -12v14m1 -13v11m1 -10v9m1 -7v9m1 -10v12m1 -13v10m1 -9v8m1 -8v9m1 -13v12m1 -8v10m1 -11v12m1 -10v9m1 -9v9m1 -15v14m1 -8v7m1 -13v14m1 -8v12m1 -12v11m1 -17v13m1 -7v12m1 -15v11m1 -8v8m1 -14v15m1 -9v12m1 -15v15m1 -13v9m1 -9v13m1 -14v9m1 -7v11m1 -13v9m1 -7v10m1 -11v11m1 -13v11m1 -9v10m1 -9v7m1 -13v14m1 -10v12m1 -16v15m1 -10v10m1 -14v16m1 -12v9m1 -9v10m1 -11v11m1 -10v12m1 -12v9m1 -11v15m1 -16v10m1 -7v8m1 -9v11m1 -12v10m1 -13v13m1 -7v7m1 -7v7m1 -8v10m1 -11v9m1 -12v13m1 -9v8m1 -13v13m1 -7v9m1 -11v9m1 -9v9m1 -8v8m1 -9v9m1 -8v13m1 -12v7m1 -13v13m1 -8v9m1 -13v17m1 -12v7m1 -8v8m1 -8v9m1 -8v8m1 -11v10m1 -9v10m1 -10v10m1 -8v11m1 -15v12m1 -13v14m1 -10v8m1 -10v12m1 -12v12m1 -11v12m1 -11v9m1 -9v13m1 -14v10m1 -10v10m1 -8v7m1 -9v9m1 -10v12m1 -9v7m1 -8v9m1 -13v14m1 -9v7m1 -7v9m1 -9v7m1 -10v16m1 -14v10m1 -9v7m1 -7v8m1 -7v7m1 -8v10m1 -14v13m1 -9v13m1 -13v10m1 -10v7m1 -8v8m1 -7v11m1 -12v12m1 -13v11m1 -9v8m1 -9v8m1 -8v9m1 -8v9m1 -11v15m1 -17v11m1 -8v8m1 -10v12m1 -12v13m1 -10v9m1 -9v10m1 -10v9m1 -9v7m1 -7v9m1 -10v10m1 -10v9m1 -13v15m1 -10v7m1 -7v10m1 -10v7m1 -11v13m1 -10v10m1 -9v7m1 -13v13m1 -9v9m1 -8v7m1 -8v9m1 -7v9m1 -9v8m1 -8v10m1 -11v14m1 -15v10m1 -7v8m1 -8v9m1 -9v10m1 -10v7m1 -7v10m1 -11v8m1 -8v8m1 -11v13m1 -15v15m1 -10v8m1 -8v12m1 -16v12m1 -9v11m1 -14v11m1 -10v15m1 -14v9m1 -8v12m1 -13v11m1 -9v7m1 -10v10m1 -7v10m1 -11v13m1 -14v11m1 -9v7m1 -9v9m1 -11v11m1 -8v8m1 -8v8m1 -8v9m1 -8v10m1 -16v14m1 -12v14m1 -10v8m1 -9v11m1 -11v7m1 -9v9m1 -12v13m1 -8v10m1 -13v10m1 -10v11m1 -12v14m1 -11v8m1 -7v8m1 -7v9m1 -14v11m1 -6v12m1 -13v12m1 -12v9m1 -12v13m1 -9v9m1 -11v9m1 -8v8m1 -7v7m1 -9v11m1 -13v11m1 -8v9m1 -13v12m1 -7v11m1 -12v8m1 -11v12m1 -8v10m1 -12v12m1 -10v10m1 -12v13m1 -11v13m1 -13v12m1 -14v9m1 -10v12m1 -9v12m1 -13v8m1 -9v15m1 -14v8m1 -11v14m1 -15v13m1 -13v13m1 -8v7m1 -11v11m1 -10v11m1 -10v13m1 -12v8m1 -8v7m1 -9v14m1 -16v12m1 -10v10m1 -8v12m1 -12v8m1 -11v12m1 -8v8m1 -9v13m1 -15v12m1 -10v8m1 -9v11m1 -14v16m1 -12v11m1 -11v8m1 -11v11m1 -6v9m1 -11v10m1 -9v11m1 -16v14m1 -11v9m1 -7v10m1 -15v13m1 -8v9m1 -12v12m1 -9v9m1 -13v13m1 -11v10m1 -8v8m1 -10v9m1 -12v17m1 -12v10m1 -16v18m1 -12v8m1 -13v13m1 -8v7m1 -11v13m1 -9v7m1 -12v17m1 -13v8m1 -13v18m1 -18v14m1 -14v14m1 -14v14m1 -8v7m1 -10v9m1 -7v7m1 -7v8m1 -8v8m1 -9v14m1 -15v12m1 -10v9m1 -11v11m1 -13v17m1 -15v11m1 -12v11m1 -8v9m1 -10v14m1 -13v8m1 -8v13m1 -15v13m1 -11v12m1 -14v10m1 -8v9m1 -8v12m1 -12v8m1 -7v12m1 -13v7m1 -12v13m1 -9v8m1 -9v10m1 -10v9m1 -10v14m1 -15v11m1 -9v11m1 -10v13m1 -15v14m1 -15v13m1 -11v12m1 -14v12m1 -8v8m1 -8v8m1 -9v9m1 -8v13m1 -16v12m1 -12v10m1 -6v6m1 -7v9m1 -14v13m1 -8v7m1 -7v7m1 -9v12m1 -15v12m1 -6v7m1 -9v9m1 -13v17m1 -14v10m1 -13v15m1 -15v14m1 -9v8m1 -10v12m1 -14v12m1 -11v10m1 -8v8m1 -12v16m1 -11v7m1 -7v10m1 -13v10m1 -11v12m1 -11v11m1 -9v8m1 -7v7m1 -8v8m1 -12v13m1 -7v8m1 -6v11m1 -11v12m1 -12v9m1 -7v7m1 -8v10m1 -11v10m1 -8v10m1 -14v11m1 -11v10m1 -10v9m1 -9v11m1 -13v13m1 -18v16m1 -10v7m1 -9v10m1 -9v8m1 -9v11m1 -10v8m1 -9v10m1 -10v13m1 -11v8m1 -13v14m1 -13v13m1 -10v10m1 -9v7m1 -8v13m1 -16v15m1 -12v10m1 -13v11m1 -8v9m1 -10v9m1 -7v7m1 -9v12m1 -11v12m1 -15v11m1 -7v8m1 -12v14m1 -12v14m1 -13v10m1 -10v10m1 -12v10m1 -9v10m1 -11v10m1 -10v11m1 -11v11m1 -10v9m1 -10v11m1 -10v9m1 -8v8m1 -8v9m1 -8v8m1 -8v10m1 -10v12m1 -14v10m1 -10v10m1 -8v10m1 -10v13m1 -17v12m1 -11v10m1 -12v13m1 -8v7m1 -12v15m1 -12v10m1 -10v9m1 -12v14m1 -14v15m1 -11v8m1 -8v8m1 -8v8m1 -9v9m1 -12v13m1 -9v13m1 -14v15m1 -15v9m1 -8v8m1 -7v11m1 -13v9m1 -7v7m1 -7v11m1 -14v13m1 -11v10m1 -10v13m1 -14v10m1 -9v9m1 -8v8m1 -9v8m1 -7v9m1 -14v12m1 -9v12m1 -12v9m1 -8v8m1 -8v8m1 -9v9m1 -7v12m1 -13v8m1 -8v11m1 -11v8m1 -8v8m1 -7v9m1 -9v8m1 -8v8m1 -8v10m1 -13v10m1 -7v7m1 -8v8m1 -7v9m1 -10v10m1 -14v15m1 -10v7m1 -9v9m1 -9v10m1 -9v9m1 -9v10m1 -9v7m1 -8v7m1 -6v7m1 -10v10m1 -7v8m1 -8v8m1 -10v11m1 -9v8m1 -9v10m1 -13v11m1 -8v14m1 -14v8m1 -10v15m1 -13v10m1 -13v13m1 -11v10m1 -8v8m1 -10v15m1 -13v8m1 -7v7m1 -8v11m1 -11v10m1 -10v7m1 -7v10m1 -11v9m1 -8v8m1 -7v8m1 -10v13m1 -16v12m1 -13v15m1 -12v10m1 -8v10m1 -10v12m1 -14v15m1 -13v12m1 -13v9m1 -10v12m1 -11v9m1 -9v13m1 -14v13m1 -12v8m1 -7v11m1 -13v9m1 -10v13m1 -15v12m1 -9v14m1 -16v12m1 -13v12m1 -9v12m1 -13v13m1 -13v12m1 -11v8m1 -7v8m1 -8v8m1 -7v8m1 -10v10m1 -9v9m1 -8v7m1 -9v12m1 -10v11m1 -12v14m1 -17v12m1 -8v9m1 -11v9m1 -7v8m1 -10v13m1 -11v8m1 -10v11m1 -8v7m1 -7v8m1 -9v11m1 -14v11m1 -10v11m1 -8v6m1 -6v6m1 -7v10m1 -12v10m1 -11v15m1 -14v14m1 -13v9m1 -12v13m1 -9v7m1 -9v14m1 -18v12m1 -7v8m1 -9v12m1 -14v13m1 -11v11m1 -15v13m1 -9v9m1 -11v11m1 -12v14m1 -9v7m1 -11v12m1 -14v15m1 -10v7m1 -9v10m1 -8v8m1 -9v11m1 -9v7m1 -10v11m1 -14v16m1 -11v8m1 -8v10m1 -9v10m1 -9v11m1 -12v7m1 -8v14m1 -13v7m1 -8v9m1 -8v11m1 -11v11m1 -11v8m1 -12v12m1 -11v15m1 -12v7m1 -8v8m1 -8v13m1 -13v8m1 -7v10m1 -11v10m1 -10v9m1 -10v9m1 -8v11m1 -11v10m1 -10v8m1 -8v8m1 -8v12m1 -13v10m1 -8v10m1 -10v7m1 -9v9m1 -8v8m1 -7v8m1 -11v10m1 -7v9m1 -9v8m1 -11v12m1 -9v8m1 -12v12m1 -9v13m1 -16v12m1 -11v10m1 -8v9m1 -13v12m1 -8v8m1 -12v14m1 -14v15m1 -10v7m1 -8v10m1 -15v14m1 -8v9m1 -10v12m1 -11v7m1 -7v13m1 -14v9m1 -9v10m1 -9v7m1 -7v8m1 -7v9m1 -12v10m1 -9v14m1 -18v14m1 -9v8m1 -11v13m1 -15v13m1 -7v10m1 -11v8m1 -9v9m1 -8v8m1 -9v9m1 -7v7m1 -11v13m1 -10v13m1 -18v12m1 -7v13m1 -13v11m1 -11v13m1 -13v8m1 -8v11m1 -12v9m1 -8v7m1 -8v9m1 -9v11m1 -11v8m1 -10v12m1 -11v9m1 -8v12m1 -12v12m1 -11v9m1 -9v9m1 -9v10m1 -11v11m1 -11v10m1 -14v13m1 -8v7m1 -7v10m1 -12v9m1 -12v16m1 -12v8m1 -9v12m1 -12v9m1 -9v13m1 -11v10m1 -11v12m1 -11v10m1 -13v14m1 -11v13m1 -17v11m1 -7v10m1 -11v9m1 -12v12m1 -14v14m1 -8v7m1 -7v7m1 -7v10m1 -10v11m1 -14v14m1 -11v7m1 -8v12m1 -14v12m1 -8v9m1 -15v14m1 -11v11m1 -9v12m1 -12v7m1 -8v9m1 -8v11m1 -12v8m1 -8v8m1 -8v10m1 -11v10m1 -10v11m1 -12v10m1 -7v13m1 -15v14m1 -13v11m1 -11v11m1 -13v13m1 -11v11m1 -14v12m1 -11v10m1 -12v14m1 -10v9m1 -11v11m1 -8v8m1 -10v12m1 -10v9m1 -14v12m1 -8v12m1 -14v12m1 -10v9m1 -11v12m1 -9v13m1 -15v10m1 -12v11m1 -8v9m1 -12v11m1 -10v13m1 -11v14m1 -13v8m1 -7v9m1 -10v9m1 -13v12m1 -8v8m1 -12v11m1 -8v9m1 -9v12m1 -11v7m1 -7v9m1 -13v11m1 -10v10m1 -7v11m1 -12v8m1 -8v12m1 -13v12m1 -16v16m1 -11v9m1 -10v12m1 -11v11m1 -11v9m1 -12v14m1 -14v11m1 -12v13m1 -10v9m1 -8v9m1 -12v11m1 -10v14m1 -12v8m1 -8v8m1 -9v14m1 -13v11m1 -11v8m1 -8v8m1 -9v9m1 -9v14m1 -12v11m1 -15v11m1 -8v13m1 -12v9m1 -15v17m1 -12v13m1 -13v8m1 -9v11m1 -9v7m1 -7v7m1 -7v7m1 -10v16m1 -15v9m1 -7v11m1 -12v10m1 -9v7m1 -9v10m1 -8v9m1 -10v9m1 -13v13m1 -9v7m1 -12v18m1 -15v10m1 -7v7m1 -8v8m1 -7v7m1 -7v7m1 -12v17m1 -13v10m1 -12v10m1 -8v8m1 -13v14m1 -11v13m1 -10v8m1 -13v14m1 -9v10m1 -10v7m1 -7v10m1 -13v10m1 -13v13m1 -8v8m1 -9v13m1 -17v18m1 -13v9m1 -9v10m1 -9v9m1 -12v10m1 -8v10m1 -9v8m1 -8v9m1 -9v10" stroke="#00f400" stroke-width="1.08" fill="none"/>
<path d="M95.5 256v13m1 -13v11m1 -9v9m1 -13v13m1 -11v11m1 -9v14m1 -18v15m1 -11v11m1 -10v12m1 -13v12m1 -11v13m1 -13v13m1 -14v14m1 -12v14m1 -14v10m1 -11v10m1 -12v11m1 -9v9m1 -11v11m1 -10v13m1 -17v18m1 -15v12m1 -12v11m1 -10v9m1 -11v13m1 -15v13m1 -11v11m1 -8v13m1 -15v10m1 -13v13m1 -8v11m1 -12v10m1 -10v9m1 -9v10m1 -9v10m1 -10v10m1 -12v12m1 -14v13m1 -11v15m1 -14v12m1 -11v15m1 -15v9m1 -9v10m1 -11v10m1 -10v13m1 -12v11m1 -12v12m1 -12v12m1 -13v13m1 -15v12m1 -10v10m1 -8v9m1 -14v14m1 -10v9m1 -8v9m1 -12v12m1 -9v11m1 -13v10m1 -11v12m1 -13v17m1 -13v9m1 -11v11m1 -11v12m1 -12v10m1 -11v17m1 -14v14m1 -14v8m1 -8v8m1 -8v8m1 -13v15m1 -12v10m1 -9v15m1 -14v10m1 -11v10m1 -11v11m1 -13v14m1 -12v14m1 -13v10m1 -9v9m1 -10v9m1 -11v12m1 -11v10m1 -14v20m1 -14v14m1 -16v10m1 -10v10m1 -15v17m1 -11v14m1 -15v9m1 -8v9m1 -9v8m1 -8v9m1 -9v8m1 -7v9m1 -12v17m1 -14v11m1 -13v13m1 -11v10m1 -13v13m1 -13v12m1 -12v15m1 -13v13m1 -17v15m1 -10v8m1 -14v17m1 -14v13m1 -11v12m1 -12v10m1 -13v13m1 -13v15m1 -12v12m1 -11v14m1 -16v12m1 -12v12m1 -14v16m1 -13v11m1 -16v15m1 -9v12m1 -8v12m1 -1v126m1 -1v165m1 0v37m1 -1v4m1 -2v9m1 -6v11m1 -9v10m1 -9v8m1 -11v8m1 -6v9m1 -5v10m1 -5v9m1 -5v8m1 -4v10m1 -5v11m1 -8v12m1 -7v10m1 -7v7m1 -11v11m1 -10v7m1 -10v8m1 -8v6m1 -11v10m1 -10v8m1 -11v10m1 -11v8m1 -10v8m1 -14v14m1 -13v9m1 -10v14m1 -15v10m1 -8v8m1 -9v10m1 -14v12m1 -7v8m1 -9v9m1 -11v15m1 -14v13m1 -13v9m1 -12v13m1 -8v9m1 -10v10m1 -9v8m1 -11v11m1 -9v11m1 -12v10m1 -9v9m1 -9v11m1 -10v11m1 -11v10m1 -12v10m1 -12v14m1 -10v8m1 -8v8m1 -9v12m1 -14v15m1 -12v10m1 -12v10m1 -12v14m1 -12v14m1 -13v9m1 -8v8m1 -13v17m1 -13v8m1 -9v12m1 -10v12m1 -14v9m1 -10v12m1 -10v9m1 -10v15m1 -15v16m1 -20v17m1 -17v14m1 -8v11m1 -15v12m1 -9v10m1 -10v12m1 -12v9m1 -8v13m1 -15v11m1 -10v10m1 -9v8m1 -9v13m1 -13v12m1 -13v14m1 -15v16m1 -15v11m1 -15v19m1 -16v12m1 -9v11m1 -12v13m1 -12v13m1 -18v18m1 -13v9m1 -10v10m1 -9v10m1 -13v18m1 -15v11m1 -11v10m1 -13v12m1 -10v10m1 -9v11m1 -18v18m1 -12v10m1 -12v12m1 -10v12m1 -11v9m1 -10v13m1 -13v11m1 -14v15m1 -16v16m1 -11v9m1 -11v11m1 -10v10m1 -10v10m1 -13v17m1 -13v10m1 -10v14m1 -15v11m1 -10v8m1 -9v9m1 -9v10m1 -14v13m1 -9v9m1 -11v11m1 -10v16m1 -15v10m1 -10v11m1 -15v14m1 -10v9m1 -11v13m1 -10v10m1 -12v12m1 -12v11m1 -9v8m1 -12v15m1 -11v9m1 -10v12m1 -15v14m1 -10v8m1 -10v10m1 -9v9m1 -12v12m1 -9v12m1 -13v10m1 -9v9m1 -12v11m1 -8v9m1 -12v18m1 -18v13m1 -10v15m1 -20v15m1 -10v8m1 -10v16m1 -13v12m1 -14v10m1 -11v11m1 -8v8m1 -15v17m1 -14v13m1 -11v12m1 -15v14m1 -15v15m1 -16v15m1 -9v11m1 -12v10m1 -12v12m1 -10v11m1 -10v14m1 -14v9m1 -11v11m1 -10v10m1 -10v12m1 -10v8m1 -9v11m1 -16v14m1 -8v8m1 -15v18m1 -11v8m1 -10v12m1 -14v14m1 -14v12m1 -14v17m1 -16v15m1 -12v10m1 -11v12m1 -10v9m1 -10v10m1 -10v10m1 -10v12m1 -15v18m1 -14v9m1 -12v12m1 -10v9m1 -9v13m1 -13v9m1 -10v14m1 -13v11m1 -13v17m1 -16v10m1 -8v10m1 -12v16m1 -14v8m1 -8v14m1 -21v18m1 -11v9m1 -16v14m1 -9v10m1 -10v13m1 -16v12m1 -10v15m1 -14v10m1 -9v9m1 -10v9m1 -8v8m1 -10v11m1 -11v11m1 -12v18m1 -14v14m1 -15v15m1 -19v16m1 -11v9m1 -10v13m1 -12v12m1 -19v16m1 -9v11m1 -11v15m1 -15v11m1 -14v13m1 -11v16m1 -15v8m1 -8v9m1 -9v12m1 -18v15m1 -10v9m1 -9v10m1 -14v13m1 -9v11m1 -11v14m1 -13v10m1 -15v14m1 -13v12m1 -8v11m1 -12v15m1 -19v14m1 -10v11m1 -14v15m1 -11v14m1 -19v15m1 -14v15m1 -12v9m1 -8v10m1 -16v15m1 -9v8m1 -13v14m1 -10v12m1 -13v11m1 -13v17m1 -16v14m1 -16v13m1 -9v12m1 -14v11m1 -9v14m1 -15v10m1 -9v12m1 -13v10m1 -8v14m1 -16v13m1 -11v8m1 -9v9m1 -10v12m1 -11v10m1 -12v11m1 -9v10m1 -16v15m1 -9v12m1 -13v10m1 -15v21m1 -15v15m1 -18v16m1 -19v14m1 -11v11m1 -9v10m1 -12v17m1 -15v11m1 -11v11m1 -10v9m1 -10v10m1 -10v15m1 -18v15m1 -17v15m1 -10v8m1 -8v10m1 -13v18m1 -18v12m1 -13v14m1 -16v19m1 -12v9m1 -9v11m1 -11v11m1 -11v12m1 -19v18m1 -14v14m1 -13v12m1 -15v19m1 -16v11m1 -12v16m1 -16v16m1 -19v15m1 -12v15m1 -16v15m1 -18v16m1 -10v9m1 -9v9m1 -11v10m1 -10v11m1 -9v9m1 -15v21m1 -18v14m1 -12v10m1 -10v11m1 -9v10m1 -12v12m1 -17v15m1 -9v9m1 -10v14m1 -13v12m1 -13v11m1 -11v14m1 -15v12m1 -10v10m1 -11v16m1 -19v17m1 -13v9m1 -10v10m1 -11v11m1 -13v18m1 -15v10m1 -10v10m1 -10v8m1 -9v16m1 -15v9m1 -11v12m1 -11v12m1 -17v16m1 -14v17m1 -17v15m1 -14v14m1 -15v13m1 -13v18m1 -18v16m1 -13v9m1 -9v15m1 -14v9m1 -10v9m1 -11v14m1 -15v13m1 -10v13m1 -12v14m1 -17v15m1 -12v10m1 -16v15m1 -13v13m1 -15v16m1 -11v10m1 -9v11m1 -17v14m1 -9v11m1 -12v9m1 -9v15m1 -16v14m1 -12v8m1 -11v12m1 -12v13m1 -12v16m1 -14v9m1 -15v16m1 -13v16m1 -13v8m1 -14v19m1 -13v11m1 -14v11m1 -9v12m1 -13v16m1 -18v16m1 -18v16m1 -13v12m1 -15v20m1 -18v15m1 -12v9m1 -15v16m1 -10v8m1 -9v10m1 -9v9m1 -9v8m1 -9v12m1 -12v13m1 -13v15m1 -17v18m1 -16v11m1 -10v8m1 -11v11m1 -7v8m1 -9v9m1 -9v9m1 -9v11m1 -13v13m1 -17v18m1 -12v10m1 -13v15m1 -11v9m1 -10v10m1 -10v12m1 -13v10m1 -9v8m1 -9v9m1 -10v11m1 -11v16m1 -14v8m1 -8v9m1 -13v12m1 -15v15m1 -11v17m1 -20v17m1 -15v12m1 -13v13m1 -15v14m1 -13v13m1 -10v10m1 -9v9m1 -10v11m1 -11v13m1 -14v13m1 -10v9m1 -15v14m1 -13v15m1 -12v12m1 -13v12m1 -16v16m1 -12v13m1 -15v19m1 -16v12m1 -10v9m1 -9v9m1 -10v11m1 -14v17m1 -14v14m1 -14v15m1 -17v18m1 -18v16m1 -16v17m1 -19v13m1 -9v9m1 -11v17m1 -15v9m1 -9v10m1 -10v8m1 -10v17m1 -16v11m1 -12v10m1 -9v11m1 -11v10m1 -13v14m1 -11v9m1 -9v15m1 -18v13m1 -13v12m1 -10v12m1 -11v14m1 -20v14m1 -8v9m1 -13v12m1 -8v10m1 -10v11m1 -13v14m1 -17v15m1 -16v19m1 -13v9m1 -9v8m1 -9v11m1 -12v11m1 -9v9m1 -10v9m1 -9v13m1 -15v12m1 -8v7m1 -10v12m1 -11v12m1 -13v15m1 -15v17m1 -16v10m1 -11v12m1 -10v9m1 -15v20m1 -17v16m1 -13v10m1 -9v12m1 -13v13m1 -17v12m1 -10v10m1 -14v14m1 -11v12m1 -10v10m1 -11v10m1 -12v15m1 -17v16m1 -12v15m1 -20v14m1 -12v12m1 -8v9m1 -14v17m1 -13v9m1 -9v13m1 -14v10m1 -9v14m1 -14v13m1 -12v14m1 -16v15m1 -18v16m1 -11v9m1 -15v15m1 -8v11m1 -14v11m1 -9v9m1 -10v11m1 -13v18m1 -15v9m1 -15v17m1 -13v11m1 -11v12m1 -13v12m1 -10v9m1 -11v14m1 -11v8m1 -14v16m1 -16v18m1 -12v12m1 -12v10m1 -13v18m1 -16v10m1 -14v14m1 -11v14m1 -12v8m1 -11v12m1 -14v16m1 -14v17m1 -17v11m1 -10v10m1 -11v12m1 -16v16m1 -11v10m1 -9v9m1 -8v14m1 -21v18m1 -18v15m1 -12v18m1 -17v10m1 -9v9m1 -10v10m1 -15v17m1 -12v12m1 -11v11m1 -11v9m1 -14v18m1 -13v12m1 -12v8m1 -12v15m1 -13v10m1 -15v17m1 -10v9m1 -10v9m1 -12v16m1 -14v11m1 -12v11m1 -8v10m1 -14v12m1 -10v12m1 -17v21m1 -18v11m1 -13v15m1 -15v13m1 -9v10m1 -10v9m1 -9v11m1 -17v18m1 -11v8m1 -9v15m1 -18v15m1 -12v10m1 -16v17m1 -13v10m1 -7v12m1 -5v15m1 -2v14m1 -2v14m1 -4v4m1 -6v4m1 -27v24m1 -46v24m1 -104v80m1 -160v80m1 -109v29m1 -58v29m1 -58v29m1 -54v25m1 -49v25m1 -36v12m1 -23v12m1 -23v12m1 -14v4m1 -8v7m1 -10v9m1 -12v11m1 -12v8m1 -8v8m1 -12v11m1 -7v9m1 -9v8m1 -8v8m1 -10v9m1 -9v11m1 -9v8m1 -14v13m1 -11v12m1 -9v8m1 -11v13m1 -10v9m1 -11v11m1 -14v16m1 -14v11m1 -10v10m1 -8v9m1 -12v14m1 -12v11m1 -11v14m1 -14v12m1 -12v10m1 -9v12m1 -18v14m1 -11v11m1 -9v9m1 -8v8m1 -9v12m1 -13v10m1 -15v15m1 -9v9m1 -9v10m1 -11v13m1 -12v9m1 -11v13m1 -14v18m1 -14v11m1 -12v9m1 -14v16m1 -14v13m1 -11v12m1 -10v10m1 -14v13m1 -11v12m1 -10v8m1 -12v15m1 -14v13m1 -11v13m1 -12v8m1 -12v17m1 -16v15m1 -18v14m1 -9v12m1 -14v12m1 -11v11m1 -10v13m1 -13v8m1 -11v12m1 -13v13m1 -11v11m1 -13v12m1 -9v14m1 -19v16m1 -12v11m1 -11v10m1 -9v9m1 -11v13m1 -13v11m1 -9v9m1 -15v15m1 -8v9m1 -13v17m1 -18v14m1 -9v8m1 -9v13m1 -13v15m1 -19v16m1 -13v16m1 -15v9m1 -13v15m1 -12v10m1 -9v9m1 -12v13m1 -11v11m1 -14v13m1 -11v13m1 -11v8m1 -9v13m1 -12v10m1 -12v14m1 -13v10m1 -10v11m1 -12v12m1 -10v11m1 -18v15m1 -15v15m1 -9v9m1 -8v12m1 -16v13m1 -9v10m1 -17v17m1 -15v17m1 -12v11m1 -15v12m1 -11v14m1 -12v15m1 -14v8m1 -9v9m1 -11v17m1 -17v13m1 -13v11m1 -14v17m1 -12v9m1 -11v12m1 -10v8m1 -14v20m1 -14v9m1 -10v11m1 -11v9m1 -12v15m1 -13v17m1 -16v13m1 -13v10m1 -15v17m1 -14v12m1 -9v12m1 -13v10m1 -13v18m1 -18v15m1 -12v10m1 -14v18m1 -14v9m1 -9v9m1 -9v10m1 -9v9m1 -12v18m1 -16v12m1 -12v9m1 -10v10m1 -10v13m1 -14v18m1 -17v11m1 -9v10m1 -11v12m1 -12v11m1 -11v10m1 -10v12m1 -11v9m1 -9v15m1 -16v11m1 -13v15m1 -18v15m1 -16v17m1 -12v15m1 -18v14m1 -13v13m1 -10v11m1 -16v18m1 -19v21m1 -16v11m1 -14v14m1 -11v12m1 -14v12m1 -13v17m1 -19v15m1 -12v12m1 -13v18m1 -16v9m1 -15v16m1 -13v14m1 -13v13m1 -13v11m1 -8v8m1 -10v11m1 -11v10m1 -11v13m1 -14v19m1 -17v15m1 -18v15m1 -11v12m1 -15v19m1 -21v17m1 -13v14m1 -13v11m1 -10v10m1 -11v10m1 -12v13m1 -11v9m1 -16v17m1 -15v20m1 -15v10m1 -10v9m1 -9v12m1 -16v13m1 -13v13m1 -10v14m1 -15v17m1 -22v15m1 -13v13m1 -9v10m1 -11v13m1 -12v10m1 -11v12m1 -11v9m1 -9v16m1 -20v12m1 -10v17m1 -17v11m1 -9v13m1 -14v11m1 -13v12m1 -16v17m1 -11v11m1 -12v11m1 -9v13m1 -13v12m1 -16v13m1 -10v10m1 -10v14m1 -13v9m1 -11v13m1 -16v15m1 -10v10m1 -11v10m1 -9v9m1 -14v17m1 -14v11m1 -9v10m1 -10v9m1 -10v10m1 -13v12m1 -10v14m1 -13v10m1 -9v10m1 -11v10m1 -9v14m1 -14v10m1 -14v13m1 -9v9m1 -9v13m1 -13v13m1 -16v19m1 -23v16m1 -11v12m1 -16v20m1 -15v10m1 -9v9m1 -8v12m1 -17v15m1 -12v11m1 -14v16m1 -18v20m1 -17v16m1 -13v17m1 -22v17m1 -10v11m1 -14v13m1 -10v12m1 -14v17m1 -15v11m1 -17v14m1 -9v12m1 -12v13m1 -12v11m1 -11v13m1 -13v12m1 -14v12m1 -15v17m1 -14v15m1 -13v11m1 -13v15m1 -16v15m1 -13v9m1 -10v11m1 -11v11m1 -13v17m1 -14v17m1 -18v11m1 -12v13m1 -10v9m1 -11v13m1 -11v11m1 -11v15m1 -15v13m1 -13v16m1 -20v13m1 -9v9m1 -9v12m1 -12v10m1 -10v10m1 -14v14m1 -9v8m1 -11v13m1 -14v13m1 -12v13m1 -11v11m1 -10v9m1 -15v17m1 -17v19m1 -14v11m1 -10v9m1 -14v15m1 -10v10m1 -10v9m1 -9v11m1 -15v17m1 -13v12m1 -12v10m1 -12v12m1 -12v12m1 -10v10m1 -11v11m1 -9v9m1 -9v11m1 -15v14m1 -10v10m1 -13v19m1 -19v12m1 -9v13m1 -15v14m1 -16v13m1 -11v14m1 -11v10m1 -11v13m1 -13v11m1 -11v14m1 -18v14m1 -14v16m1 -13v10m1 -11v13m1 -17v15m1 -11v12m1 -15v18m1 -15v11m1 -8v12m1 -12v12m1 -15v13m1 -12v13m1 -13v12m1 -12v12m1 -11v11m1 -12v11m1 -12v12m1 -9v9m1 -9v11m1 -12v11m1 -13v15m1 -17v17m1 -16v13m1 -10v10m1 -10v10m1 -9v10m1 -11v12m1 -12v10m1 -9v12m1 -16v16m1 -18v21m1 -19v18m1 -17v13m1 -10v9m1 -15v17m1 -16v20m1 -19v15m1 -15v14m1 -16v22m1 -16v9m1 -8v15m1 -20v15m1 -11v11m1 -11v9m1 -14v14m1 -11v13m1 -16v15m1 -9v8m1 -15v19m1 -14v11m1 -14v13m1 -9v11m1 -11v9m1 -10v10m1 -9v11m1 -11v10m1 -12v13m1 -13v19m1 -19v12m1 -9v9m1 -11v13m1 -13v14m1 -13v11m1 -13v13m1 -14v14m1 -10v9m1 -11v16m1 -17v15m1 -12v15m1 -15v16m1 -18v12m1 -15v17m1 -12v12m1 -18v16m1 -11v11m1 -16v21m1 -20v18m1 -13v10m1 -10v10m1 -15v16m1 -10v10m1 -10v9m1 -11v18m1 -19v13m1 -16v18m1 -20v16m1 -14v20m1 -19v14m1 -10v13m1 -14v10m1 -9v13m1 -14v17m1 -16v10m1 -13v17m1 -17v13m1 -10v11m1 -15v14m1 -10v10m1 -9v10m1 -11v10m1 -10v13m1 -13v17m1 -16v13m1 -15v12m1 -11v16m1 -19v17m1 -13v12m1 -18v18m1 -13v11m1 -9v13m1 -21v18m1 -14v14m1 -13v13m1 -14v12m1 -9v10m1 -12v11m1 -15v22m1 -16v13m1 -20v16m1 -9v9m1 -9v9m1 -13v20m1 -17v10m1 -9v10m1 -16v20m1 -17v13m1 -15v19m1 -17v13m1 -10v16m1 -18v14m1 -18v17m1 -12v10m1 -9v10m1 -16v22m1 -18v12m1 -12v11m1 -16v17m1 -10v10m1 -13v19" stroke="#9494f8" stroke-width="1.08" fill="none"/>
<path d="M95.5 235v10m1 -10v8m1 -8v9m1 -9v8m1 -9v10m1 -9v9m1 -9v14m1 -15v11m1 -10v12m1 -12v9m1 -10v15m1 -14v9m1 -9v9m1 -10v10m1 -15v14m1 -8v11m1 -17v16m1 -9v8m1 -13v13m1 -10v11m1 -12v12m1 -11v12m1 -11v10m1 -11v11m1 -9v8m1 -9v12m1 -12v10m1 -10v12m1 -16v13m1 -10v13m1 -18v16m1 -10v15m1 -17v15m1 -14v11m1 -14v12m1 -9v12m1 -12v15m1 -21v15m1 -10v12m1 -10v11m1 -12v11m1 -11v14m1 -13v11m1 -13v12m1 -11v9m1 -8v8m1 -11v12m1 -10v9m1 -8v11m1 -15v14m1 -9v14m1 -16v15m1 -15v11m1 -14v19m1 -16v12m1 -13v15m1 -14v16m1 -15v9m1 -11v16m1 -15v11m1 -12v11m1 -10v9m1 -9v11m1 -12v12m1 -11v10m1 -9v12m1 -14v10m1 -14v14m1 -9v12m1 -13v10m1 -10v10m1 -15v15m1 -8v14m1 -15v13m1 -15v14m1 -13v16m1 -16v13m1 -13v10m1 -11v12m1 -13v15m1 -12v13m1 -13v9m1 -11v12m1 -9v9m1 -10v12m1 -13v10m1 -8v8m1 -12v13m1 -16v16m1 -9v8m1 -8v9m1 -11v15m1 -13v12m1 -12v12m1 -13v13m1 -12v10m1 -13v16m1 -14v16m1 -16v10m1 -10v10m1 -9v8m1 -8v11m1 -11v14m1 -21v19m1 -16v12m1 -10v13m1 -12v9m1 -9v12m1 -12v10m1 -13v15m1 -13v10m1 -10v12m1 -10v10m1 -11v12m1 -12v14m1 -18v16m1 -12v11m1 -11v12m1 -8v10m1 -7v10m1 -8v11m1 -7v8m1 -8v10m1 -6v9m1 -9v11m1 -6v10m1 -7v7m1 -5v8m1 -8v11m1 -6v6m1 -7v8m1 -9v12m1 -10v9m1 -6v9m1 -9v12m1 -12v12m1 -13v11m1 -9v12m1 -13v10m1 -13v12m1 -12v8m1 -11v10m1 -12v11m1 -12v10m1 -16v14m1 -12v12m1 -15v11m1 -13v12m1 -13v10m1 -8v10m1 -13v12m1 -10v9m1 -8v7m1 -8v13m1 -12v7m1 -11v16m1 -13v7m1 -12v16m1 -16v13m1 -9v9m1 -12v12m1 -8v8m1 -11v16m1 -14v10m1 -10v8m1 -7v9m1 -15v17m1 -12v9m1 -15v14m1 -8v10m1 -10v9m1 -9v11m1 -10v8m1 -8v11m1 -11v8m1 -10v12m1 -9v11m1 -13v9m1 -9v13m1 -16v15m1 -11v12m1 -12v10m1 -10v13m1 -15v11m1 -10v10m1 -11v12m1 -11v15m1 -16v12m1 -12v11m1 -10v11m1 -11v8m1 -14v15m1 -9v8m1 -13v13m1 -8v10m1 -11v10m1 -9v7m1 -7v9m1 -13v12m1 -10v9m1 -8v10m1 -11v10m1 -11v11m1 -12v11m1 -9v12m1 -16v16m1 -17v16m1 -12v12m1 -9v8m1 -11v12m1 -10v10m1 -10v12m1 -12v9m1 -15v18m1 -11v10m1 -10v11m1 -13v10m1 -8v9m1 -11v11m1 -9v9m1 -9v8m1 -9v11m1 -12v15m1 -15v11m1 -12v12m1 -10v11m1 -10v8m1 -8v12m1 -17v17m1 -12v8m1 -8v8m1 -14v14m1 -15v16m1 -10v10m1 -10v9m1 -9v14m1 -20v21m1 -15v15m1 -14v11m1 -14v11m1 -11v11m1 -10v12m1 -10v14m1 -15v9m1 -10v15m1 -14v13m1 -15v11m1 -10v11m1 -14v13m1 -8v13m1 -15v10m1 -9v12m1 -12v15m1 -15v9m1 -15v16m1 -13v14m1 -13v10m1 -11v14m1 -10v8m1 -14v15m1 -11v12m1 -15v12m1 -8v10m1 -12v11m1 -10v12m1 -17v16m1 -10v15m1 -15v9m1 -10v13m1 -13v12m1 -11v9m1 -11v11m1 -13v13m1 -10v9m1 -8v9m1 -12v11m1 -11v12m1 -9v15m1 -18v17m1 -15v9m1 -9v10m1 -9v8m1 -9v13m1 -14v10m1 -10v14m1 -12v9m1 -9v9m1 -12v13m1 -16v16m1 -15v17m1 -12v10m1 -16v16m1 -10v10m1 -10v13m1 -13v11m1 -14v12m1 -12v14m1 -13v13m1 -13v12m1 -14v12m1 -8v8m1 -10v12m1 -16v14m1 -8v14m1 -16v12m1 -11v10m1 -9v9m1 -12v18m1 -15v15m1 -21v14m1 -8v9m1 -9v8m1 -9v9m1 -9v11m1 -10v12m1 -14v14m1 -12v11m1 -16v15m1 -14v12m1 -10v15m1 -13v11m1 -11v9m1 -11v13m1 -11v9m1 -10v9m1 -9v10m1 -13v14m1 -13v11m1 -8v10m1 -11v12m1 -14v11m1 -9v10m1 -10v9m1 -9v11m1 -17v16m1 -9v11m1 -12v9m1 -9v10m1 -10v11m1 -16v14m1 -7v8m1 -10v15m1 -14v9m1 -9v10m1 -14v19m1 -15v11m1 -11v9m1 -9v11m1 -16v20m1 -16v12m1 -13v16m1 -16v13m1 -12v12m1 -12v11m1 -12v12m1 -12v12m1 -14v13m1 -14v16m1 -11v10m1 -11v10m1 -10v17m1 -16v15m1 -15v14m1 -16v15m1 -17v13m1 -9v11m1 -11v9m1 -8v9m1 -14v13m1 -11v17m1 -21v21m1 -15v14m1 -15v13m1 -19v18m1 -14v11m1 -10v11m1 -9v11m1 -12v12m1 -15v19m1 -15v9m1 -9v8m1 -8v10m1 -10v13m1 -19v15m1 -13v14m1 -16v16m1 -15v14m1 -9v9m1 -11v12m1 -11v10m1 -13v18m1 -15v15m1 -15v10m1 -10v9m1 -11v16m1 -13v8m1 -9v14m1 -13v9m1 -15v18m1 -12v10m1 -16v16m1 -12v11m1 -9v9m1 -11v11m1 -13v12m1 -12v13m1 -11v11m1 -9v8m1 -13v15m1 -14v15m1 -15v15m1 -13v10m1 -15v16m1 -9v14m1 -16v10m1 -9v13m1 -13v11m1 -12v10m1 -12v13m1 -11v15m1 -15v11m1 -11v11m1 -10v11m1 -14v12m1 -11v13m1 -13v12m1 -11v14m1 -12v9m1 -9v15m1 -16v15m1 -13v9m1 -14v15m1 -13v15m1 -14v11m1 -9v8m1 -8v8m1 -10v11m1 -15v14m1 -10v13m1 -12v9m1 -11v17m1 -21v18m1 -12v9m1 -9v9m1 -12v12m1 -9v8m1 -8v14m1 -14v9m1 -11v15m1 -16v13m1 -10v9m1 -11v11m1 -15v14m1 -11v11m1 -9v10m1 -12v15m1 -14v11m1 -9v8m1 -10v10m1 -11v11m1 -13v17m1 -13v8m1 -8v10m1 -11v11m1 -9v8m1 -8v12m1 -18v17m1 -16v13m1 -10v16m1 -14v12m1 -15v13m1 -11v10m1 -13v14m1 -11v15m1 -14v8m1 -10v13m1 -12v10m1 -9v15m1 -18v18m1 -15v10m1 -11v9m1 -8v8m1 -10v16m1 -19v16m1 -12v9m1 -11v15m1 -17v16m1 -11v8m1 -11v11m1 -12v14m1 -17v21m1 -17v11m1 -15v19m1 -16v18m1 -20v16m1 -10v14m1 -20v18m1 -12v9m1 -11v13m1 -12v10m1 -11v12m1 -10v9m1 -8v13m1 -14v11m1 -10v9m1 -12v12m1 -10v11m1 -10v11m1 -13v9m1 -10v11m1 -9v8m1 -8v15m1 -16v9m1 -15v17m1 -11v9m1 -15v18m1 -11v11m1 -15v18m1 -18v14m1 -12v15m1 -14v9m1 -10v10m1 -12v18m1 -19v14m1 -16v15m1 -10v15m1 -20v17m1 -13v11m1 -12v13m1 -11v10m1 -8v8m1 -8v11m1 -14v13m1 -10v8m1 -9v9m1 -8v13m1 -18v17m1 -14v11m1 -16v17m1 -10v14m1 -17v11m1 -8v9m1 -10v14m1 -13v9m1 -11v10m1 -14v15m1 -16v20m1 -14v9m1 -8v11m1 -12v9m1 -8v9m1 -12v13m1 -10v8m1 -9v9m1 -13v14m1 -10v9m1 -12v13m1 -10v9m1 -14v15m1 -9v11m1 -12v11m1 -11v14m1 -17v13m1 -11v11m1 -13v13m1 -10v11m1 -10v14m1 -19v15m1 -17v19m1 -16v18m1 -17v12m1 -9v9m1 -10v9m1 -12v16m1 -12v12m1 -12v9m1 -10v12m1 -12v9m1 -8v9m1 -12v12m1 -13v14m1 -12v12m1 -17v15m1 -8v9m1 -10v10m1 -9v14m1 -14v14m1 -17v11m1 -11v11m1 -9v12m1 -12v9m1 -10v12m1 -11v13m1 -15v11m1 -10v15m1 -13v8m1 -8v9m1 -11v12m1 -14v14m1 -10v13m1 -17v12m1 -9v9m1 -9v15m1 -18v18m1 -17v11m1 -14v15m1 -13v17m1 -14v9m1 -11v11m1 -9v9m1 -13v12m1 -8v10m1 -14v19m1 -17v17m1 -17v12m1 -12v11m1 -11v11m1 -11v14m1 -12v9m1 -9v9m1 -9v12m1 -13v15m1 -13v13m1 -15v10m1 -9v13m1 -18v15m1 -10v9m1 -9v9m1 -12v13m1 -15v14m1 -10v11m1 -14v15m1 -13v13m1 -15v17m1 -14v10m1 -9v9m1 -9v13m1 -17v18m1 -13v10m1 -13v11m1 -10v10m1 -9v9m1 -11v11m1 -15v16m1 -9v9m1 -15v15m1 -14v15m1 -12v10m1 -13v17m1 -16v18m1 -16v11m1 -10v14m1 -17v11m1 -8v15m1 -16v9m1 -11v15m1 -14v12m1 -12v11m1 -14v13m1 -10v15m1 -14v10m1 -10v13m1 -18v14m1 -9v10m1 -10v8m1 -8v9m1 -10v12m1 -14v13m1 -11v13m1 -11v12m1 -13v10m1 -14v20m1 -20v18m1 -17v13m1 -12v12m1 -9v14m1 -16v12m1 -10v9m1 -9v9m1 -14v14m1 -9v10m1 -10v14m1 -21v19m1 -14v14m1 -13v13m1 -13v10m1 -12v12m1 -12v12m1 -11v12m1 -12v11m1 -13v17m1 -19v15m1 -11v11m1 -10v11m1 -16v14m1 -10v10m1 -14v16m1 -15v18m1 -15v10m1 -10v12m1 -14v12m1 -12v12m1 -8v8m1 -10v11m1 -11v9m1 -9v10m1 -10v9m1 -8v9m1 -15v16m1 -11v14m1 -12v13m1 -9v9m1 -7v11m1 -9v11m1 -4v10m1 -6v11m1 -7v8m1 -5v7m1 -4v8m1 -6v6m1 -10v10m1 -14v10m1 -13v8m1 -13v9m1 -10v7m1 -13v10m1 -12v10m1 -14v9m1 -8v12m1 -3v10m1 -3v11m1 -4v13m1 -6v12m1 -3v13m1 -3v14m1 -3v12m1 -3v13m1 -5v15m1 -4v12m1 -2v13m1 -3v10m1 -2v11m1 -4v10m1 -8v8m1 -13v8m1 -20v15m1 -29v16m1 -28v15m1 -28v16m1 -29v16m1 -28v15m1 -26v13m1 -20v9m1 -17v11m1 -17v10m1 -15v8m1 -12v7m1 -12v9m1 -15v9m1 -12v8m1 -6v6m1 -4v8m1 -7v7m1 -4v8m1 -6v7m1 -6v6m1 -7v9m1 -12v11m1 -11v8m1 -10v11m1 -11v6m1 -9v12m1 -14v8m1 -7v6m1 -7v11m1 -12v12m1 -12v12m1 -13v8m1 -9v9m1 -10v11m1 -10v7m1 -8v14m1 -15v8m1 -10v13m1 -11v9m1 -13v15m1 -14v12m1 -10v15m1 -19v17m1 -12v9m1 -11v9m1 -9v9m1 -11v12m1 -10v13m1 -14v10m1 -15v21m1 -15v12m1 -12v8m1 -9v10m1 -9v9m1 -12v14m1 -14v13m1 -12v12m1 -11v9m1 -8v11m1 -12v11m1 -13v14m1 -12v8m1 -12v14m1 -11v11m1 -11v16m1 -16v12m1 -16v15m1 -16v18m1 -18v21m1 -17v16m1 -16v10m1 -10v11m1 -16v14m1 -12v13m1 -10v13m1 -17v16m1 -14v12m1 -11v16m1 -21v15m1 -11v11m1 -11v11m1 -13v19m1 -21v15m1 -12v18m1 -17v13m1 -17v14m1 -10v13m1 -14v15m1 -12v14m1 -14v9m1 -9v9m1 -16v19m1 -13v14m1 -13v12m1 -13v16m1 -17v13m1 -12v9m1 -15v18m1 -18v16m1 -13v12m1 -11v16m1 -14v13m1 -18v18m1 -13v8m1 -8v9m1 -13v17m1 -14v10m1 -12v14m1 -14v12m1 -12v13m1 -11v16m1 -17v11m1 -10v10m1 -12v16m1 -14v11m1 -11v13m1 -18v13m1 -10v11m1 -11v12m1 -12v11m1 -12v16m1 -20v14m1 -11v11m1 -14v16m1 -13v13m1 -11v10m1 -13v14m1 -17v17m1 -17v20m1 -14v9m1 -11v12m1 -17v18m1 -14v15m1 -17v16m1 -15v14m1 -11v12m1 -11v15m1 -15v9m1 -12v12m1 -10v9m1 -9v11m1 -11v13m1 -13v11m1 -17v16m1 -14v20m1 -19v12m1 -11v11m1 -9v14m1 -14v14m1 -16v11m1 -10v9m1 -12v12m1 -11v14m1 -12v12m1 -14v16m1 -17v14m1 -17v15m1 -10v9m1 -9v10m1 -10v10m1 -15v17m1 -13v10m1 -10v15m1 -17v15m1 -13v12m1 -18v16m1 -11v10m1 -14v16m1 -18v18m1 -11v11m1 -12v11m1 -10v9m1 -16v17m1 -11v12m1 -16v14m1 -14v15m1 -13v19m1 -18v11m1 -12v13m1 -11v14m1 -14v10m1 -16v16m1 -10v12m1 -13v12m1 -10v14m1 -18v15m1 -15v12m1 -14v14m1 -12v19m1 -18v11m1 -9v10m1 -17v18m1 -13v12m1 -15v14m1 -14v16m1 -15v20m1 -18v11m1 -12v17m1 -15v14m1 -14v10m1 -10v9m1 -12v14m1 -16v14m1 -12v13m1 -11v10m1 -10v15m1 -16v13m1 -14v11m1 -11v11m1 -12v12m1 -9v16m1 -18v11m1 -13v16m1 -20v21m1 -16v12m1 -11v11m1 -15v15m1 -12v16m1 -15v18m1 -18v11m1 -17v24m1 -17v10m1 -17v22m1 -17v15m1 -21v19m1 -14v17m1 -14v9m1 -12v19m1 -20v16m1 -16v19m1 -19v17m1 -20v18m1 -13v11m1 -11v18m1 -17v11m1 -10v12m1 -16v14m1 -10v11m1 -12v11m1 -11v14m1 -16v15m1 -15v13m1 -10v11m1 -18v20m1 -14v15m1 -17v13m1 -12v15m1 -18v21m1 -19v16m1 -18v16m1 -17v24m1 -21v14m1 -10v11m1 -10v9m1 -9v10m1 -10v15m1 -17v11m1 -9v12m1 -15v13m1 -10v11m1 -12v14m1 -12v11m1 -12v14m1 -14v10m1 -9v11m1 -16v15m1 -14v21m1 -23v18m1 -12v10m1 -11v17m1 -15v9m1 -9v17m1 -18v13m1 -13v11m1 -12v11m1 -12v14m1 -15v13m1 -12v14m1 -12v11m1 -11v11m1 -12v12m1 -11v10m1 -10v10m1 -9v10m1 -14v15m1 -12v18m1 -21v16m1 -13v16m1 -14v12m1 -14v11m1 -14v15m1 -10v12m1 -18v16m1 -10v14m1 -20v16m1 -11v19m1 -17v14m1 -16v16m1 -16v12m1 -11v12m1 -17v20m1 -21v21m1 -21v23m1 -16v11m1 -17v23m1 -19v18m1 -17v14m1 -19v16m1 -10v10m1 -9v9m1 -12v15m1 -14v13m1 -18v23m1 -20v14m1 -13v13m1 -11v15m1 -19v16m1 -12v17m1 -16v10m1 -17v17m1 -16v16m1 -11v13m1 -13v13m1 -16v14m1 -10v11m1 -12v12m1 -12v10m1 -8v10m1 -11v11m1 -13v15m1 -18v15m1 -10v11m1 -14v17m1 -15v11m1 -15v17m1 -19v19m1 -11v10m1 -11v10m1 -12v14m1 -11v12m1 -12v9m1 -11v12m1 -11v12m1 -12v13m1 -19v20m1 -13v16m1 -18v14m1 -11v8m1 -11v12m1 -10v11m1 -17v18m1 -14v16m1 -18v18m1 -14v11m1 -11v15m1 -14v14m1 -16v12m1 -10v15m1 -21v18m1 -14v18m1 -17v13m1 -13v11m1 -13v19m1 -19v12m1 -12v13m1 -11v10m1 -10v12m1 -13v12m1 -12v12m1 -10v9m1 -11v15m1 -20v16m1 -10v17m1 -16v13m1 -15v12m1 -14v20m1 -17v12m1 -12v12m1 -12v10m1 -11v14m1 -12v12m1 -16v15m1 -13v11m1 -10v12m1 -13v14m1 -12v11m1 -18v17m1 -10v12m1 -16v14m1 -10v10m1 -10v11m1 -10v13m1 -14v10m1 -10v15m1 -15v13m1 -13v12m1 -13v12m1 -16v15m1 -10v10m1 -9v16m1 -17v14m1 -14v10m1 -11v13m1 -15v14m1 -11v9m1 -13v16m1 -12v12m1 -12v13m1 -15v12m1 -11v15m1 -14v10m1 -10v11m1 -12v11m1 -9v10m1 -13v13m1 -10v13m1 -13v13m1 -15v14m1 -18v17m1 -11v10m1 -13v14m1 -17v23m1 -15v9m1 -10v11m1 -15v16m1 -16v15m1 -18v17m1 -11v11m1 -10v12m1 -16v14m1 -13v15m1 -12v11m1 -12v13m1 -13v18m1 -17v14m1 -21v16m1 -17v19m1 -16v15m1 -11v15m1 -19v15m1 -10v15m1 -18v12m1 -10v10m1 -10v11m1 -11v12m1 -13v12m1 -12v13m1 -11v10m1 -13v12m1 -14v19m1 -14v10m1 -10v10m1 -10v15" stroke="#ff8200" stroke-width="1.08" fill="none"/>
</g>
<text x="96" y="175.0" font-family="Liberation Mono" font-size="12" fill="#e8e800" textLength="41.6" lengthAdjust="spacingAndGlyphs">56.2 mV</text>
<text x="96" y="239.2" font-family="Liberation Mono" font-size="12" fill="#e8e800" textLength="41.6" lengthAdjust="spacingAndGlyphs">35.4 mV</text>
<text x="96" y="303.4" font-family="Liberation Mono" font-size="12" fill="#e8e800" textLength="41.6" lengthAdjust="spacingAndGlyphs">14.6 mV</text>
<text x="96" y="367.6" font-family="Liberation Mono" font-size="12" fill="#e8e800" textLength="41.6" lengthAdjust="spacingAndGlyphs">-6.2 mV</text>
<text x="96" y="431.8" font-family="Liberation Mono" font-size="12" fill="#e8e800" textLength="35.7" lengthAdjust="spacingAndGlyphs">-27 mV</text>
<text x="96" y="496.0" font-family="Liberation Mono" font-size="12" fill="#e8e800" textLength="47.6" lengthAdjust="spacingAndGlyphs">-47.8 mV</text>
<text x="96" y="560.2" font-family="Liberation Mono" font-size="12" fill="#e8e800" textLength="47.6" lengthAdjust="spacingAndGlyphs">-68.6 mV</text>
<text x="96" y="624.4" font-family="Liberation Mono" font-size="12" fill="#e8e800" textLength="47.6" lengthAdjust="spacingAndGlyphs">-89.4 mV</text>
<text x="96" y="688.6" font-family="Liberation Mono" font-size="12" fill="#e8e800" textLength="53.6" lengthAdjust="spacingAndGlyphs">-110.2 mV</text>
<text x="96" y="752.8" font-family="Liberation Mono" font-size="12" fill="#e8e800" textLength="41.6" lengthAdjust="spacingAndGlyphs">-131 mV</text>
<text x="197" y="753" font-family="Liberation Mono" font-size="12" fill="#e8e800" textLength="41.6" lengthAdjust="spacingAndGlyphs">-100 ns</text>
<text x="297" y="753" font-family="Liberation Mono" font-size="12" fill="#e8e800" textLength="35.7" lengthAdjust="spacingAndGlyphs">400 ns</text>
<text x="397" y="753" font-family="Liberation Mono" font-size="12" fill="#e8e800" textLength="35.7" lengthAdjust="spacingAndGlyphs">900 ns</text>
<text x="497" y="753" font-family="Liberation Mono" font-size="12" fill="#e8e800" textLength="35.7" lengthAdjust="spacingAndGlyphs">1.4 µs</text>
<text x="597" y="753" font-family="Liberation Mono" font-size="12" fill="#e8e800" textLength="35.7" lengthAdjust="spacingAndGlyphs">1.9 µs</text>
<text x="697" y="753" font-family="Liberation Mono" font-size="12" fill="#e8e800" textLength="35.7" lengthAdjust="spacingAndGlyphs">2.4 µs</text>
<text x="797" y="753" font-family="Liberation Mono" font-size="12" fill="#e8e800" textLength="35.7" lengthAdjust="spacingAndGlyphs">2.9 µs</text>
<text x="897" y="753" font-family="Liberation Mono" font-size="12" fill="#e8e800" textLength="35.7" lengthAdjust="spacingAndGlyphs">3.4 µs</text>
<text x="997" y="753" font-family="Liberation Mono" font-size="12" fill="#e8e800" textLength="35.7" lengthAdjust="spacingAndGlyphs">3.9 µs</text>
<text x="1097" y="753" font-family="Liberation Mono" font-size="12" fill="#e8e800" textLength="35.7" lengthAdjust="spacingAndGlyphs">4.4 µs</text>
<text x="1197" y="753" font-family="Liberation Mono" font-size="12" fill="#e8e800" textLength="35.7" lengthAdjust="spacingAndGlyphs">4.9 µs</text>
<path d="M179.5 756.5L194.5 742L209.5 756.5Z" fill="none" stroke="#777" stroke-width="2"/>
<path d="M208.5 119H220.5L214.5 131Z" fill="#9a9af5"/>
<path d="M209 134H220V137H216V146H213V137H209Z" fill="#9a9af5"/>
<path d="M214.5 380.5L220.5 387L214.5 393.5L208.5 387Z" fill="none" stroke="#9a9af5" stroke-width="1.2"/>
<path d="M206 387H208.5M220.5 387H223" stroke="#9a9af5" stroke-width="1.2"/>
<path d="M1295 387.5L1304 378H1333V397H1304Z" fill="#9a9af5"/>
<text x="1308" y="394" font-family="Liberation Sans" font-weight="bold" font-size="15" fill="#000" textLength="18" lengthAdjust="spacingAndGlyphs">TL</text>
<rect x="1272" y="224" width="18" height="11" fill="#000"/>
<text x="1273" y="234" font-family="Liberation Sans" font-size="11" fill="#ff8200" textLength="16" lengthAdjust="spacingAndGlyphs">Prk</text>
<rect x="1272" y="248" width="18" height="11" fill="#000"/>
<text x="1273" y="258" font-family="Liberation Sans" font-size="11" fill="#9494f8" textLength="16" lengthAdjust="spacingAndGlyphs">Pik</text>
<rect x="1272" y="308" width="18" height="11" fill="#000"/>
<text x="1273" y="318" font-family="Liberation Sans" font-size="11" fill="#00f000" textLength="16" lengthAdjust="spacingAndGlyphs">Pis</text>
<rect x="1272" y="347" width="18" height="11" fill="#000"/>
<text x="1273" y="357" font-family="Liberation Sans" font-size="11" fill="#f5f500" textLength="16" lengthAdjust="spacingAndGlyphs">prs</text>
<path d="M56 224H85L93 233.25L85 242.5H56Z" fill="none" stroke="#8b4a10" stroke-width="1"/>
<text x="59" y="239" font-family="Liberation Sans" font-size="17" fill="#9a5a1a" textLength="17" lengthAdjust="spacingAndGlyphs">C3</text>
<path d="M56 249H85L93 258.25L85 267.5H56Z" fill="none" stroke="#5a5a9a" stroke-width="1"/>
<text x="59" y="264" font-family="Liberation Sans" font-size="17" fill="#6a6aaa" textLength="17" lengthAdjust="spacingAndGlyphs">C4</text>
<path d="M56 307H85L93 316.25L85 325.5H56Z" fill="none" stroke="#117711" stroke-width="1"/>
<text x="59" y="322" font-family="Liberation Sans" font-size="17" fill="#118811" textLength="17" lengthAdjust="spacingAndGlyphs">C2</text>
<path d="M56 346H85L93 355.25L85 364.5H56Z" fill="#f5f500" stroke="#f5f500" stroke-width="1"/>
<text x="59" y="361" font-family="Liberation Sans" font-size="17" fill="#000" textLength="17" lengthAdjust="spacingAndGlyphs">C1</text>
</svg>
<div style="position:absolute;left:55px;top:760px;width:1280px;height:39px;background:#1b2124;"></div>
<div style="position:absolute;left:58px;top:768px;width:23px;height:23px;background:#00ee00;"></div>
<div style="position:absolute;left:58px;top:768px;width:23px;height:23px;text-align:center;font:normal 16px/23px 'Liberation Sans', sans-serif;color:#111;white-space:nowrap;"><span style="display:inline-block;transform:scaleX(0.8);transform-origin:50% 50%">C2</span></div>
<svg style="position:absolute;left:83px;top:765px" width="14" height="28"><path d="M5.5 2H2V26H5.5M8.5 2H12V26H8.5" fill="none" stroke="#fff" stroke-width="1.8"/></svg>
<div style="position:absolute;left:101px;top:765px;font:normal 22px/28px 'Liberation Sans', sans-serif;color:#fff;white-space:nowrap;transform:scaleX(0.81);transform-origin:0 50%;">Mean: -111.6 µV</div>
<div style="position:absolute;left:56px;top:799px;width:43px;height:41px;background:#fff200;"></div>
<div style="position:absolute;left:56px;top:801px;width:43px;height:36px;text-align:center;font:normal 22px/36px 'Liberation Sans', sans-serif;color:#000;white-space:nowrap;"><span style="display:inline-block;transform:scaleX(0.74);transform-origin:50% 50%">C1</span></div>
<div style="position:absolute;left:99px;top:799px;width:156px;height:41px;background:#2b343b;border-top:2px solid #fff200;"></div>
<div style="position:absolute;right:1923px;top:804px;height:34px;white-space:nowrap;color:#fff;font-family:'Liberation Sans',sans-serif;transform:scaleX(.8);transform-origin:100% 50%"><span style="font-size:26px;line-height:34px">20.8</span><span style="font-size:18.5px;line-height:34px;font-weight:bold;letter-spacing:1px"> mV/</span></div>
<div style="position:absolute;left:235px;top:800px;width:16px;height:22px;text-align:center;font:normal 20px/22px 'Liberation Sans', sans-serif;color:#fff;white-space:nowrap;"><span style="display:inline-block;transform:scaleX(0.85);transform-origin:50% 50%">Ω</span></div>
<div style="position:absolute;left:238px;top:826px;width:14px;height:16px;text-align:center;font:normal 13px/16px 'Liberation Sans', sans-serif;color:#fff;white-space:nowrap;"><span style="display:inline-block;transform:scaleX(0.72);transform-origin:50% 50%">1:1</span></div>
<div style="position:absolute;left:256px;top:799px;width:43px;height:41px;background:#007c00;"></div>
<div style="position:absolute;left:256px;top:801px;width:43px;height:36px;text-align:center;font:normal 22px/36px 'Liberation Sans', sans-serif;color:#000;white-space:nowrap;"><span style="display:inline-block;transform:scaleX(0.74);transform-origin:50% 50%">C2</span></div>
<div style="position:absolute;left:299px;top:799px;width:156px;height:41px;background:#2b343b;border-top:2px solid #007c00;"></div>
<div style="position:absolute;right:1723px;top:804px;height:34px;white-space:nowrap;color:#fff;font-family:'Liberation Sans',sans-serif;transform:scaleX(.8);transform-origin:100% 50%"><span style="font-size:26px;line-height:34px">20</span><span style="font-size:18.5px;line-height:34px;font-weight:bold;letter-spacing:1px"> mV/</span></div>
<div style="position:absolute;left:435px;top:800px;width:16px;height:22px;text-align:center;font:normal 20px/22px 'Liberation Sans', sans-serif;color:#fff;white-space:nowrap;"><span style="display:inline-block;transform:scaleX(0.85);transform-origin:50% 50%">Ω</span></div>
<div style="position:absolute;left:438px;top:826px;width:14px;height:16px;text-align:center;font:normal 13px/16px 'Liberation Sans', sans-serif;color:#fff;white-space:nowrap;"><span style="display:inline-block;transform:scaleX(0.72);transform-origin:50% 50%">1:1</span></div>
<div style="position:absolute;left:457px;top:799px;width:43px;height:41px;background:#8a4600;"></div>
<div style="position:absolute;left:457px;top:801px;width:43px;height:36px;text-align:center;font:normal 22px/36px 'Liberation Sans', sans-serif;color:#000;white-space:nowrap;"><span style="display:inline-block;transform:scaleX(0.74);transform-origin:50% 50%">C3</span></div>
<div style="position:absolute;left:500px;top:799px;width:156px;height:41px;background:#2b343b;border-top:2px solid #8a4600;"></div>
<div style="position:absolute;right:1522px;top:804px;height:34px;white-space:nowrap;color:#fff;font-family:'Liberation Sans',sans-serif;transform:scaleX(.8);transform-origin:100% 50%"><span style="font-size:26px;line-height:34px">5</span><span style="font-size:18.5px;line-height:34px;font-weight:bold;letter-spacing:1px"> mV/</span></div>
<div style="position:absolute;left:636px;top:800px;width:16px;height:22px;text-align:center;font:normal 20px/22px 'Liberation Sans', sans-serif;color:#fff;white-space:nowrap;"><span style="display:inline-block;transform:scaleX(0.85);transform-origin:50% 50%">Ω</span></div>
<div style="position:absolute;left:639px;top:826px;width:14px;height:16px;text-align:center;font:normal 13px/16px 'Liberation Sans', sans-serif;color:#fff;white-space:nowrap;"><span style="display:inline-block;transform:scaleX(0.72);transform-origin:50% 50%">1:1</span></div>
<div style="position:absolute;left:658px;top:799px;width:43px;height:41px;background:#5a5794;"></div>
<div style="position:absolute;left:658px;top:801px;width:43px;height:36px;text-align:center;font:normal 22px/36px 'Liberation Sans', sans-serif;color:#000;white-space:nowrap;"><span style="display:inline-block;transform:scaleX(0.74);transform-origin:50% 50%">C4</span></div>
<div style="position:absolute;left:701px;top:799px;width:156px;height:41px;background:#2b343b;border-top:2px solid #5a5794;"></div>
<div style="position:absolute;right:1321px;top:804px;height:34px;white-space:nowrap;color:#fff;font-family:'Liberation Sans',sans-serif;transform:scaleX(.8);transform-origin:100% 50%"><span style="font-size:26px;line-height:34px">5</span><span style="font-size:18.5px;line-height:34px;font-weight:bold;letter-spacing:1px"> mV/</span></div>
<div style="position:absolute;left:837px;top:800px;width:16px;height:22px;text-align:center;font:normal 20px/22px 'Liberation Sans', sans-serif;color:#fff;white-space:nowrap;"><span style="display:inline-block;transform:scaleX(0.85);transform-origin:50% 50%">Ω</span></div>
<div style="position:absolute;left:840px;top:826px;width:14px;height:16px;text-align:center;font:normal 13px/16px 'Liberation Sans', sans-serif;color:#fff;white-space:nowrap;"><span style="display:inline-block;transform:scaleX(0.72);transform-origin:50% 50%">1:1</span></div>
<div style="position:absolute;left:859px;top:799px;width:398px;height:41px;background:#2b343b;"></div>
<div style="position:absolute;left:1259px;top:799px;width:76px;height:41px;background:#2b343b;"></div>
<svg style="position:absolute;left:1255px;top:755px" width="85" height="90"><path d="M42.5 6L80.5 44L42.5 82L4.5 44Z" fill="#2b343b"/><path d="M4.5 44L42.5 6L80.5 44" fill="none" stroke="#0c0f10" stroke-width="1.4"/><path d="M42.5 12L74.5 44L42.5 76L10.5 44Z" fill="none" stroke="#ff8c00" stroke-width="1.6"/><path d="M42.5 19.75L66.75 44L42.5 68.25L18.25 44Z" fill="none" stroke="#20a0f8" stroke-width="4.6"/><path d="M28 53C34 46 40 47 43 43C46 39 48 36 52 33" stroke="#20a0f8" stroke-width="3" fill="none"/><text x="31.5" y="44.5" font-family="Liberation Sans" font-weight="bold" font-size="15" fill="#20a0f8">R</text><text x="43" y="57" font-family="Liberation Sans" font-weight="bold" font-size="15" fill="#20a0f8">S</text></svg>
<div style="position:absolute;left:1259px;top:823px;width:76px;height:20px;text-align:center;font:bold 17.5px/20px 'Liberation Sans', sans-serif;color:#fff;white-space:nowrap;"><span style="display:inline-block;transform:scaleX(0.86);transform-origin:50% 50%">Menu</span></div>
<div style="position:absolute;left:1421px;top:19px;width:336px;height:862px;background:linear-gradient(180deg,#4c71a9 0%,#4f74aa 50%,#4d72a8 100%);"></div>
<div style="position:absolute;left:1756px;top:19px;width:336px;height:862px;background:#2f344c;"></div>
<div style="position:absolute;left:1452px;top:29px;font:bold 22px/26px 'Liberation Sans', sans-serif;color:#f4f4f4;white-space:nowrap;transform:scaleX(0.8);transform-origin:0 50%;-webkit-text-stroke:0.35px #f4f4f4;">Horizontal</div>
<div style="position:absolute;left:1449px;top:69px;width:74px;height:49px;border-radius:8px;background:linear-gradient(#c9cad1,#a9aab3);border:1.6px solid #a4a4a8;box-shadow:inset 0 0 0 1.3px #45454b,-1px -3px 11px rgba(0,0,30,.45)"><div style="position:absolute;left:-10px;width:91px;top:13.0px;height:20px;text-align:center;font:bold 21px/20px 'Liberation Sans',sans-serif;color:#0c0c0c;-webkit-text-stroke:0.45px #0c0c0c;white-space:nowrap"><span style="display:inline-block;transform:scaleX(0.76)">Zoom</span></div></div>
<div style="position:absolute;left:1449px;top:169px;width:74px;height:49px;border-radius:8px;background:linear-gradient(#c9cad1,#a9aab3);border:1.6px solid #a4a4a8;box-shadow:inset 0 0 0 1.3px #45454b,-1px -3px 11px rgba(0,0,30,.45)"><div style="position:absolute;left:-10px;width:91px;top:3.0px;height:20px;text-align:center;font:bold 21px/20px 'Liberation Sans',sans-serif;color:#0c0c0c;-webkit-text-stroke:0.45px #0c0c0c;white-space:nowrap"><span style="display:inline-block;transform:scaleX(0.76)">Hori-</span></div><div style="position:absolute;left:-10px;width:91px;top:23.0px;height:20px;text-align:center;font:bold 21px/20px 'Liberation Sans',sans-serif;color:#0c0c0c;-webkit-text-stroke:0.45px #0c0c0c;white-space:nowrap"><span style="display:inline-block;transform:scaleX(0.76)">zontal</span></div></div>
<div style="position:absolute;left:1449px;top:269px;width:74px;height:49px;border-radius:8px;background:linear-gradient(#c9cad1,#a9aab3);border:1.6px solid #a4a4a8;box-shadow:inset 0 0 0 1.3px #45454b,-1px -3px 11px rgba(0,0,30,.45)"><div style="position:absolute;left:-10px;width:91px;top:3.0px;height:20px;text-align:center;font:bold 21px/20px 'Liberation Sans',sans-serif;color:#0c0c0c;-webkit-text-stroke:0.45px #0c0c0c;white-space:nowrap"><span style="display:inline-block;transform:scaleX(0.76)">Acqui-</span></div><div style="position:absolute;left:-10px;width:91px;top:23.0px;height:20px;text-align:center;font:bold 21px/20px 'Liberation Sans',sans-serif;color:#0c0c0c;-webkit-text-stroke:0.45px #0c0c0c;white-space:nowrap"><span style="display:inline-block;transform:scaleX(0.76)">sition</span></div></div>
<div style="position:absolute;left:1600px;top:44px;width:81px;height:22px;text-align:center;font:bold 19px/22px 'Liberation Sans', sans-serif;color:#f4f4f4;white-space:nowrap;-webkit-text-stroke:0.3px #f4f4f4;"><span style="display:inline-block;transform:scaleX(0.78);transform-origin:50% 50%">Position</span></div>
<div style="position:absolute;left:1603px;top:70px;width:76px;height:76px;border-radius:50%;box-shadow:5px 8px 18px rgba(0,0,35,.7)"></div><svg style="position:absolute;left:1601px;top:68px" width="80" height="80" viewBox="-40 -40 80 80"><defs><linearGradient id="kg1" x1="0" y1="0" x2="0" y2="1"><stop offset="0" stop-color="#b2b2ba"/><stop offset="1" stop-color="#6c6c74"/></linearGradient><linearGradient id="ko1" x1="0" y1="0" x2="0" y2="1"><stop offset="0" stop-color="#5c5c64"/><stop offset="1" stop-color="#2a2a30"/></linearGradient><radialGradient id="kb1" cx="45%" cy="35%" r="70%"><stop offset="0" stop-color="#b8b8c0"/><stop offset="1" stop-color="#a2a2aa"/></radialGradient><radialGradient id="kr1" cx="50%" cy="35%" r="65%"><stop offset="0" stop-color="#f6f6f7"/><stop offset=".7" stop-color="#e2e2e5"/><stop offset="1" stop-color="#c9c9ce"/></radialGradient></defs><circle r="38" fill="url(#ko1)"/><circle r="36.4" fill="url(#kg1)"/><circle r="33.2" fill="url(#kb1)"/><circle cx="0.0" cy="-34.2" r="2.5" fill="#5c5c64"/><circle cx="-29.6" cy="-17.1" r="2.5" fill="#5c5c64"/><circle cx="-29.6" cy="17.1" r="2.5" fill="#5c5c64"/><circle cx="-0.0" cy="34.2" r="2.5" fill="#5c5c64"/><circle cx="29.6" cy="17.1" r="2.5" fill="#5c5c64"/><circle cx="29.6" cy="-17.1" r="2.5" fill="#5c5c64"/><circle r="28.1" fill="#b9b9c1"/></svg>
<svg style="position:absolute;left:1601px;top:73px" width="8" height="14"><path d="M8 0V14L0 7.0Z" fill="#e8e8ea"/></svg>
<svg style="position:absolute;left:1673px;top:73px" width="8" height="14"><path d="M0 0V14L8 7.0Z" fill="#e8e8ea"/></svg>
<svg style="position:absolute;left:1597px;top:136px" width="18" height="17"><g fill="#e8e8ea"><path d="M5.5 0H10.8V2.4L15.2 2.6L8.2 7.4L1.2 2.6L5.5 2.4Z"/><path d="M4.6 8.4H11.6L13 14.4H3.2Z"/><rect x="0" y="14.2" width="16.4" height="2"/></g></svg>
<div style="position:absolute;left:1671px;top:125px;font:bold 12px/14px 'Liberation Sans', sans-serif;color:#f0f0f0;white-space:nowrap;transform:scaleX(0.8);transform-origin:0 50%;">Push</div>
<div style="position:absolute;left:1671px;top:139px;font:bold 12px/14px 'Liberation Sans', sans-serif;color:#f0f0f0;white-space:nowrap;transform:scaleX(0.8);transform-origin:0 50%;">to Zero</div>
<div style="position:absolute;left:1600px;top:205px;width:81px;height:22px;text-align:center;font:bold 19px/22px 'Liberation Sans', sans-serif;color:#f4f4f4;white-space:nowrap;-webkit-text-stroke:0.3px #f4f4f4;"><span style="display:inline-block;transform:scaleX(0.78);transform-origin:50% 50%">Scale</span></div>
<div style="position:absolute;left:1594px;top:238px;width:94px;height:94px;border-radius:50%;box-shadow:5px 8px 18px rgba(0,0,35,.7)"></div><svg style="position:absolute;left:1592px;top:236px" width="98" height="98" viewBox="-49 -49 98 98"><defs><linearGradient id="kg2" x1="0" y1="0" x2="0" y2="1"><stop offset="0" stop-color="#b2b2ba"/><stop offset="1" stop-color="#6c6c74"/></linearGradient><linearGradient id="ko2" x1="0" y1="0" x2="0" y2="1"><stop offset="0" stop-color="#5c5c64"/><stop offset="1" stop-color="#2a2a30"/></linearGradient><radialGradient id="kb2" cx="45%" cy="35%" r="70%"><stop offset="0" stop-color="#b8b8c0"/><stop offset="1" stop-color="#a2a2aa"/></radialGradient><radialGradient id="kr2" cx="50%" cy="35%" r="65%"><stop offset="0" stop-color="#f6f6f7"/><stop offset=".7" stop-color="#e2e2e5"/><stop offset="1" stop-color="#c9c9ce"/></radialGradient></defs><circle r="47" fill="url(#ko2)"/><circle r="45.4" fill="url(#kg2)"/><circle r="42.2" fill="url(#kb2)"/><circle cx="0.0" cy="-43.2" r="2.5" fill="#5c5c64"/><circle cx="-37.4" cy="-21.6" r="2.5" fill="#5c5c64"/><circle cx="-37.4" cy="21.6" r="2.5" fill="#5c5c64"/><circle cx="-0.0" cy="43.2" r="2.5" fill="#5c5c64"/><circle cx="37.4" cy="21.6" r="2.5" fill="#5c5c64"/><circle cx="37.4" cy="-21.6" r="2.5" fill="#5c5c64"/><circle r="34.8" fill="#b9b9c1"/></svg>
<svg style="position:absolute;left:1589px;top:238px" width="18" height="16"><path d="M0 0V15L8 7.5ZM17 0V15L9 7.5Z" fill="#e8e8ea"/></svg>
<svg style="position:absolute;left:1676px;top:238px" width="17" height="16"><path d="M7.5 0V15L0 7.5ZM9.5 0V15L17 7.5Z" fill="#e8e8ea"/></svg>
<svg style="position:absolute;left:1589px;top:315px" width="18" height="17"><g fill="#e8e8ea"><path d="M5.5 0H10.8V2.4L15.2 2.6L8.2 7.4L1.2 2.6L5.5 2.4Z"/><path d="M4.6 8.4H11.6L13 14.4H3.2Z"/><rect x="0" y="14.2" width="16.4" height="2"/></g></svg>
<div style="position:absolute;left:1682px;top:310px;font:bold 12px/14px 'Liberation Sans', sans-serif;color:#f0f0f0;white-space:nowrap;transform:scaleX(0.8);transform-origin:0 50%;">Coarse</div>
<div style="position:absolute;left:1682px;top:324px;font:bold 12px/14px 'Liberation Sans', sans-serif;color:#f0f0f0;white-space:nowrap;transform:scaleX(0.8);transform-origin:0 50%;">Fine</div>
<div style="position:absolute;left:1433px;top:342px;width:312px;height:4px;background:#f2f2f4;"></div>
<div style="position:absolute;left:1452px;top:357px;font:bold 22px/26px 'Liberation Sans', sans-serif;color:#f4f4f4;white-space:nowrap;transform:scaleX(0.8);transform-origin:0 50%;-webkit-text-stroke:0.35px #f4f4f4;">Vertical</div>
<div style="position:absolute;left:1449px;top:397px;width:74px;height:49px;border-radius:8px;background:linear-gradient(#f2f2f3,#dcdcde);border:1.6px solid #a4a4a8;box-shadow:inset 0 0 0 1.3px #45454b,-1px -3px 11px rgba(0,0,30,.45)"><div style="position:absolute;left:-10px;width:91px;top:13.0px;height:20px;text-align:center;font:bold 21px/20px 'Liberation Sans',sans-serif;color:#0c0c0c;-webkit-text-stroke:0.45px #0c0c0c;white-space:nowrap"><span style="display:inline-block;transform:scaleX(0.76)">Ch1</span></div></div>
<div style="position:absolute;left:1449px;top:500px;width:74px;height:49px;border-radius:8px;background:linear-gradient(#f2f2f3,#dcdcde);border:1.6px solid #a4a4a8;box-shadow:inset 0 0 0 1.3px #45454b,-1px -3px 11px rgba(0,0,30,.45)"><div style="position:absolute;left:-10px;width:91px;top:13.0px;height:20px;text-align:center;font:bold 21px/20px 'Liberation Sans',sans-serif;color:#0c0c0c;-webkit-text-stroke:0.45px #0c0c0c;white-space:nowrap"><span style="display:inline-block;transform:scaleX(0.76)">Ch2</span></div></div>
<div style="position:absolute;left:1449px;top:602px;width:74px;height:49px;border-radius:8px;background:linear-gradient(#f2f2f3,#dcdcde);border:1.6px solid #a4a4a8;box-shadow:inset 0 0 0 1.3px #45454b,-1px -3px 11px rgba(0,0,30,.45)"><div style="position:absolute;left:-10px;width:91px;top:13.0px;height:20px;text-align:center;font:bold 21px/20px 'Liberation Sans',sans-serif;color:#0c0c0c;-webkit-text-stroke:0.45px #0c0c0c;white-space:nowrap"><span style="display:inline-block;transform:scaleX(0.76)">Ch3</span></div></div>
<div style="position:absolute;left:1449px;top:705px;width:74px;height:49px;border-radius:8px;background:linear-gradient(#f2f2f3,#dcdcde);border:1.6px solid #a4a4a8;box-shadow:inset 0 0 0 1.3px #45454b,-1px -3px 11px rgba(0,0,30,.45)"><div style="position:absolute;left:-10px;width:91px;top:13.0px;height:20px;text-align:center;font:bold 21px/20px 'Liberation Sans',sans-serif;color:#0c0c0c;-webkit-text-stroke:0.45px #0c0c0c;white-space:nowrap"><span style="display:inline-block;transform:scaleX(0.76)">Ch4</span></div></div>
<div style="position:absolute;left:1588px;top:421px;width:106px;height:106px;border-radius:50%;box-shadow:5px 8px 18px rgba(0,0,35,.7)"></div><svg style="position:absolute;left:1586px;top:419px" width="110" height="110" viewBox="-55 -55 110 110"><defs><linearGradient id="kg3" x1="0" y1="0" x2="0" y2="1"><stop offset="0" stop-color="#b2b2ba"/><stop offset="1" stop-color="#6c6c74"/></linearGradient><linearGradient id="ko3" x1="0" y1="0" x2="0" y2="1"><stop offset="0" stop-color="#5c5c64"/><stop offset="1" stop-color="#2a2a30"/></linearGradient><radialGradient id="kb3" cx="45%" cy="35%" r="70%"><stop offset="0" stop-color="#b8b8c0"/><stop offset="1" stop-color="#a2a2aa"/></radialGradient><radialGradient id="kr3" cx="50%" cy="35%" r="65%"><stop offset="0" stop-color="#f6f6f7"/><stop offset=".7" stop-color="#e2e2e5"/><stop offset="1" stop-color="#c9c9ce"/></radialGradient></defs><circle r="53" fill="url(#kr3)"/><circle r="43" fill="#d4d4d8" stroke="#c4c4c9" stroke-width="1"/><circle r="38" fill="url(#ko3)"/><circle r="36.4" fill="url(#kg3)"/><circle r="33.2" fill="url(#kb3)"/><circle cx="33.5" cy="-7.1" r="2.5" fill="#5c5c64"/><circle cx="10.6" cy="-32.5" r="2.5" fill="#5c5c64"/><circle cx="-22.9" cy="-25.4" r="2.5" fill="#5c5c64"/><circle cx="-33.5" cy="7.1" r="2.5" fill="#5c5c64"/><circle cx="-10.6" cy="32.5" r="2.5" fill="#5c5c64"/><circle cx="22.9" cy="25.4" r="2.5" fill="#5c5c64"/><circle r="28.1" fill="#b9b9c1"/></svg>
<svg style="position:absolute;left:1583px;top:428px" width="15" height="8"><path d="M0 0H15L7.5 8Z" fill="#e8e8ea"/></svg>
<svg style="position:absolute;left:1684px;top:428px" width="15" height="8"><path d="M0 8H15L7.5 0Z" fill="#e8e8ea"/></svg>
<svg style="position:absolute;left:1587px;top:510px" width="18" height="17"><g fill="#e8e8ea"><path d="M5.5 0H10.8V2.4L15.2 2.6L8.2 7.4L1.2 2.6L5.5 2.4Z"/><path d="M4.6 8.4H11.6L13 14.4H3.2Z"/><rect x="0" y="14.2" width="16.4" height="2"/></g></svg>
<div style="position:absolute;left:1689px;top:500px;font:bold 12px/14px 'Liberation Sans', sans-serif;color:#f0f0f0;white-space:nowrap;transform:scaleX(0.8);transform-origin:0 50%;">Push</div>
<div style="position:absolute;left:1689px;top:514px;font:bold 12px/14px 'Liberation Sans', sans-serif;color:#f0f0f0;white-space:nowrap;transform:scaleX(0.8);transform-origin:0 50%;">to Zero</div>
<div style="position:absolute;left:1600px;top:610px;width:81px;height:22px;text-align:center;font:bold 19px/22px 'Liberation Sans', sans-serif;color:#f4f4f4;white-space:nowrap;-webkit-text-stroke:0.3px #f4f4f4;"><span style="display:inline-block;transform:scaleX(0.78);transform-origin:50% 50%">Scale</span></div>
<div style="position:absolute;left:1580px;top:641px;width:122px;height:122px;border-radius:50%;box-shadow:5px 8px 18px rgba(0,0,35,.7)"></div><svg style="position:absolute;left:1578px;top:639px" width="126" height="126" viewBox="-63 -63 126 126"><defs><linearGradient id="kg4" x1="0" y1="0" x2="0" y2="1"><stop offset="0" stop-color="#b2b2ba"/><stop offset="1" stop-color="#6c6c74"/></linearGradient><linearGradient id="ko4" x1="0" y1="0" x2="0" y2="1"><stop offset="0" stop-color="#5c5c64"/><stop offset="1" stop-color="#2a2a30"/></linearGradient><radialGradient id="kb4" cx="45%" cy="35%" r="70%"><stop offset="0" stop-color="#b8b8c0"/><stop offset="1" stop-color="#a2a2aa"/></radialGradient><radialGradient id="kr4" cx="50%" cy="35%" r="65%"><stop offset="0" stop-color="#f6f6f7"/><stop offset=".7" stop-color="#e2e2e5"/><stop offset="1" stop-color="#c9c9ce"/></radialGradient></defs><circle r="61" fill="url(#kr4)"/><circle r="52" fill="#d4d4d8" stroke="#c4c4c9" stroke-width="1"/><circle r="47" fill="url(#ko4)"/><circle r="45.4" fill="url(#kg4)"/><circle r="42.2" fill="url(#kb4)"/><circle cx="0.0" cy="-43.2" r="2.5" fill="#5c5c64"/><circle cx="-37.4" cy="-21.6" r="2.5" fill="#5c5c64"/><circle cx="-37.4" cy="21.6" r="2.5" fill="#5c5c64"/><circle cx="-0.0" cy="43.2" r="2.5" fill="#5c5c64"/><circle cx="37.4" cy="21.6" r="2.5" fill="#5c5c64"/><circle cx="37.4" cy="-21.6" r="2.5" fill="#5c5c64"/><circle r="34.8" fill="#b9b9c1"/></svg>
<svg style="position:absolute;left:1582px;top:636px" width="16" height="18"><path d="M0 0H15L7.5 8ZM0 17H15L7.5 9Z" fill="#e8e8ea"/></svg>
<svg style="position:absolute;left:1685px;top:637px" width="15" height="17"><path d="M0 7.5H14L7 0ZM0 9.5H14L7 17Z" fill="#e8e8ea"/></svg>
<svg style="position:absolute;left:1579px;top:748px" width="18" height="17"><g fill="#e8e8ea"><path d="M5.5 0H10.8V2.4L15.2 2.6L8.2 7.4L1.2 2.6L5.5 2.4Z"/><path d="M4.6 8.4H11.6L13 14.4H3.2Z"/><rect x="0" y="14.2" width="16.4" height="2"/></g></svg>
<div style="position:absolute;left:1696px;top:738px;font:bold 12px/14px 'Liberation Sans', sans-serif;color:#f0f0f0;white-space:nowrap;transform:scaleX(0.8);transform-origin:0 50%;">Coarse</div>
<div style="position:absolute;left:1696px;top:752px;font:bold 12px/14px 'Liberation Sans', sans-serif;color:#f0f0f0;white-space:nowrap;transform:scaleX(0.8);transform-origin:0 50%;">Fine</div>
<div style="position:absolute;left:1449px;top:807px;width:74px;height:49px;border-radius:8px;background:linear-gradient(#f2f2f3,#dcdcde);border:1.6px solid #a4a4a8;box-shadow:inset 0 0 0 1.3px #45454b,-1px -3px 11px rgba(0,0,30,.45)"><div style="position:absolute;left:-10px;width:91px;top:13.0px;height:20px;text-align:center;font:bold 21px/20px 'Liberation Sans',sans-serif;color:#0c0c0c;-webkit-text-stroke:0.45px #0c0c0c;white-space:nowrap"><span style="display:inline-block;transform:scaleX(0.76)">Logic</span></div></div>
<div style="position:absolute;left:1555px;top:807px;width:74px;height:49px;border-radius:8px;background:linear-gradient(#f2f2f3,#dcdcde);border:1.6px solid #a4a4a8;box-shadow:inset 0 0 0 1.3px #45454b,-1px -3px 11px rgba(0,0,30,.45)"><div style="position:absolute;left:-10px;width:91px;top:13.0px;height:20px;text-align:center;font:bold 21px/20px 'Liberation Sans',sans-serif;color:#0c0c0c;-webkit-text-stroke:0.45px #0c0c0c;white-space:nowrap"><span style="display:inline-block;transform:scaleX(0.76)">Ref</span></div></div>
<div style="position:absolute;left:1660px;top:807px;width:74px;height:49px;border-radius:8px;background:linear-gradient(#f2f2f3,#dcdcde);border:1.6px solid #a4a4a8;box-shadow:inset 0 0 0 1.3px #45454b,-1px -3px 11px rgba(0,0,30,.45)"><div style="position:absolute;left:-10px;width:91px;top:13.0px;height:20px;text-align:center;font:bold 21px/20px 'Liberation Sans',sans-serif;color:#0c0c0c;-webkit-text-stroke:0.45px #0c0c0c;white-space:nowrap"><span style="display:inline-block;transform:scaleX(0.76)">Math</span></div></div>
<div style="position:absolute;left:1787px;top:27px;font:bold 22px/26px 'Liberation Sans', sans-serif;color:#f4f4f4;white-space:nowrap;transform:scaleX(0.8);transform-origin:0 50%;-webkit-text-stroke:0.35px #f4f4f4;">Trigger</div>
<div style="position:absolute;left:1779px;top:69px;width:74px;height:49px;border-radius:8px;background:linear-gradient(#c9cad1,#a9aab3);border:1.6px solid #a4a4a8;box-shadow:inset 0 0 0 1.3px #45454b,-1px -3px 11px rgba(0,0,30,.45)"><div style="position:absolute;left:-10px;width:91px;top:13.0px;height:20px;text-align:center;font:bold 21px/20px 'Liberation Sans',sans-serif;color:#0c0c0c;-webkit-text-stroke:0.45px #0c0c0c;white-space:nowrap"><span style="display:inline-block;transform:scaleX(0.76)">Trigger</span></div></div>
<div style="position:absolute;left:1779px;top:142px;width:74px;height:49px;border-radius:8px;background:linear-gradient(#f2f2f3,#dcdcde);border:1.6px solid #a4a4a8;box-shadow:inset 0 0 0 1.3px #45454b,-1px -3px 11px rgba(0,0,30,.45)"><div style="position:absolute;left:-10px;width:91px;top:13.0px;height:20px;text-align:center;font:bold 21px/20px 'Liberation Sans',sans-serif;color:#0c0c0c;-webkit-text-stroke:0.45px #0c0c0c;white-space:nowrap"><span style="display:inline-block;transform:scaleX(0.76)">Source</span></div></div>
<div style="position:absolute;left:1779px;top:215px;width:74px;height:49px;border-radius:8px;background:linear-gradient(#f2f2f3,#dcdcde);border:1.6px solid #a4a4a8;box-shadow:inset 0 0 0 1.3px #45454b,-1px -3px 11px rgba(0,0,30,.45)"><div style="position:absolute;left:-10px;width:91px;top:3.0px;height:20px;text-align:center;font:bold 21px/20px 'Liberation Sans',sans-serif;color:#0c0c0c;-webkit-text-stroke:0.45px #0c0c0c;white-space:nowrap"><span style="display:inline-block;transform:scaleX(0.76)">Auto</span></div><div style="position:absolute;left:-10px;width:91px;top:23.0px;height:20px;text-align:center;font:bold 21px/20px 'Liberation Sans',sans-serif;color:#0c0c0c;-webkit-text-stroke:0.45px #0c0c0c;white-space:nowrap"><span style="display:inline-block;transform:scaleX(0.76)">Norm</span></div></div>
<div style="position:absolute;left:1990px;top:69px;width:74px;height:49px;border-radius:8px;background:linear-gradient(#f2f2f3,#dcdcde);border:1.6px solid #a4a4a8;box-shadow:inset 0 0 0 1.3px #45454b,-1px -3px 11px rgba(0,0,30,.45)"><div style="position:absolute;left:-10px;width:91px;top:3.0px;height:20px;text-align:center;font:bold 21px/20px 'Liberation Sans',sans-serif;color:#0c0c0c;-webkit-text-stroke:0.45px #0c0c0c;white-space:nowrap"><span style="display:inline-block;transform:scaleX(0.76)">Run</span></div><div style="position:absolute;left:-10px;width:91px;top:23.0px;height:20px;text-align:center;font:bold 21px/20px 'Liberation Sans',sans-serif;color:#0c0c0c;-webkit-text-stroke:0.45px #0c0c0c;white-space:nowrap"><span style="display:inline-block;transform:scaleX(0.76)">Stop</span></div></div>
<div style="position:absolute;left:1990px;top:142px;width:74px;height:49px;border-radius:8px;background:linear-gradient(#f2f2f3,#dcdcde);border:1.6px solid #a4a4a8;box-shadow:inset 0 0 0 1.3px #45454b,-1px -3px 11px rgba(0,0,30,.45)"><div style="position:absolute;left:-10px;width:91px;top:13.0px;height:20px;text-align:center;font:bold 21px/20px 'Liberation Sans',sans-serif;color:#0c0c0c;-webkit-text-stroke:0.45px #0c0c0c;white-space:nowrap"><span style="display:inline-block;transform:scaleX(0.76)">Single</span></div></div>
<div style="position:absolute;left:1990px;top:215px;width:74px;height:49px;border-radius:8px;background:linear-gradient(#c9cad1,#a9aab3);border:1.6px solid #a4a4a8;box-shadow:inset 0 0 0 1.3px #45454b,-1px -3px 11px rgba(0,0,30,.45)"><div style="position:absolute;left:-10px;width:91px;top:3.0px;height:20px;text-align:center;font:bold 21px/20px 'Liberation Sans',sans-serif;color:#0c0c0c;-webkit-text-stroke:0.45px #0c0c0c;white-space:nowrap"><span style="display:inline-block;transform:scaleX(0.76)">Force</span></div><div style="position:absolute;left:-10px;width:91px;top:23.0px;height:20px;text-align:center;font:bold 21px/20px 'Liberation Sans',sans-serif;color:#0c0c0c;-webkit-text-stroke:0.45px #0c0c0c;white-space:nowrap"><span style="display:inline-block;transform:scaleX(0.76)">Trigger</span></div></div>
<div style="position:absolute;left:1901px;top:67px;width:41px;height:18px;background:#e6e6e8;"></div>
<div style="position:absolute;left:1901px;top:66px;width:41px;height:19px;text-align:center;font:bold 14px/19px 'Liberation Sans', sans-serif;color:#111;white-space:nowrap;-webkit-text-stroke:0.3px #111;"><span style="display:inline-block;transform:scaleX(0.78);transform-origin:50% 50%">Trig'd</span></div>
<div style="position:absolute;left:1881px;top:104px;width:81px;height:22px;text-align:center;font:bold 19px/22px 'Liberation Sans', sans-serif;color:#f4f4f4;white-space:nowrap;-webkit-text-stroke:0.3px #f4f4f4;"><span style="display:inline-block;transform:scaleX(0.78);transform-origin:50% 50%">Levels</span></div>
<div style="position:absolute;left:1883px;top:129px;width:76px;height:76px;border-radius:50%;box-shadow:5px 8px 18px rgba(0,0,35,.7)"></div><svg style="position:absolute;left:1881px;top:127px" width="80" height="80" viewBox="-40 -40 80 80"><defs><linearGradient id="kg5" x1="0" y1="0" x2="0" y2="1"><stop offset="0" stop-color="#b2b2ba"/><stop offset="1" stop-color="#6c6c74"/></linearGradient><linearGradient id="ko5" x1="0" y1="0" x2="0" y2="1"><stop offset="0" stop-color="#5c5c64"/><stop offset="1" stop-color="#2a2a30"/></linearGradient><radialGradient id="kb5" cx="45%" cy="35%" r="70%"><stop offset="0" stop-color="#b8b8c0"/><stop offset="1" stop-color="#a2a2aa"/></radialGradient><radialGradient id="kr5" cx="50%" cy="35%" r="65%"><stop offset="0" stop-color="#f6f6f7"/><stop offset=".7" stop-color="#e2e2e5"/><stop offset="1" stop-color="#c9c9ce"/></radialGradient></defs><circle r="38" fill="url(#ko5)"/><circle r="36.4" fill="url(#kg5)"/><circle r="33.2" fill="url(#kb5)"/><circle cx="22.0" cy="-26.2" r="2.5" fill="#5c5c64"/><circle cx="-11.7" cy="-32.1" r="2.5" fill="#5c5c64"/><circle cx="-33.7" cy="-5.9" r="2.5" fill="#5c5c64"/><circle cx="-22.0" cy="26.2" r="2.5" fill="#5c5c64"/><circle cx="11.7" cy="32.1" r="2.5" fill="#5c5c64"/><circle cx="33.7" cy="5.9" r="2.5" fill="#5c5c64"/><circle r="28.1" fill="#b9b9c1"/></svg>
<svg style="position:absolute;left:1872px;top:136px" width="15" height="7"><path d="M0 0H15L7.5 7Z" fill="#e8e8ea"/></svg>
<svg style="position:absolute;left:1955px;top:136px" width="15" height="7"><path d="M0 7H15L7.5 0Z" fill="#e8e8ea"/></svg>
<svg style="position:absolute;left:1872px;top:195px" width="18" height="17"><g fill="#e8e8ea"><path d="M5.5 0H10.8V2.4L15.2 2.6L8.2 7.4L1.2 2.6L5.5 2.4Z"/><path d="M4.6 8.4H11.6L13 14.4H3.2Z"/><rect x="0" y="14.2" width="16.4" height="2"/></g></svg>
<div style="position:absolute;left:1956px;top:183px;font:bold 12px/14px 'Liberation Sans', sans-serif;color:#f0f0f0;white-space:nowrap;transform:scaleX(0.8);transform-origin:0 50%;">Push</div>
<div style="position:absolute;left:1943px;top:197px;font:bold 12px/14px 'Liberation Sans', sans-serif;color:#f0f0f0;white-space:nowrap;transform:scaleX(0.8);transform-origin:0 50%;">for 50%</div>
<div style="position:absolute;left:1768px;top:288.5px;width:312px;height:4px;background:#f2f2f4;"></div>
<div style="position:absolute;left:1787px;top:303px;font:bold 22px/26px 'Liberation Sans', sans-serif;color:#f4f4f4;white-space:nowrap;transform:scaleX(0.8);transform-origin:0 50%;-webkit-text-stroke:0.35px #f4f4f4;">Action</div>
<div style="position:absolute;left:1779px;top:343px;width:74px;height:49px;border-radius:8px;background:linear-gradient(#c9cad1,#a9aab3);border:1.6px solid #a4a4a8;box-shadow:inset 0 0 0 1.3px #45454b,-1px -3px 11px rgba(0,0,30,.45)"></div>
<svg style="position:absolute;left:1796px;top:353px" width="40" height="29"><g fill="#060608"><rect x="0" y="4.3" width="39.5" height="23.7" rx="3"/><ellipse cx="20" cy="6" rx="11.5" ry="6"/><rect x="1" y="2.6" width="9" height="4" rx="2"/></g><circle cx="20.3" cy="14.7" r="7.4" fill="none" stroke="#c8c8cf" stroke-width="2.1"/></svg>
<div style="position:absolute;left:1884px;top:343px;width:74px;height:49px;border-radius:8px;background:linear-gradient(#c9cad1,#a9aab3);border:1.6px solid #a4a4a8;box-shadow:inset 0 0 0 1.3px #45454b,-1px -3px 11px rgba(0,0,30,.45)"><div style="position:absolute;left:-10px;width:91px;top:3.0px;height:20px;text-align:center;font:bold 21px/20px 'Liberation Sans',sans-serif;color:#0c0c0c;-webkit-text-stroke:0.45px #0c0c0c;white-space:nowrap"><span style="display:inline-block;transform:scaleX(0.76)">Save</span></div><div style="position:absolute;left:-10px;width:91px;top:23.0px;height:20px;text-align:center;font:bold 21px/20px 'Liberation Sans',sans-serif;color:#0c0c0c;-webkit-text-stroke:0.45px #0c0c0c;white-space:nowrap"><span style="display:inline-block;transform:scaleX(0.76)">Load</span></div></div>
<div style="position:absolute;left:1990px;top:343px;width:74px;height:49px;border-radius:8px;background:linear-gradient(#43b3a0,#2f9784);border:1.6px solid #a4a4a8;box-shadow:inset 0 0 0 1.3px #45454b,-1px -3px 11px rgba(0,0,30,.45)"><div style="position:absolute;left:-10px;width:91px;top:13.0px;height:20px;text-align:center;font:bold 21px/20px 'Liberation Sans',sans-serif;color:#0c0c0c;-webkit-text-stroke:0.45px #0c0c0c;white-space:nowrap"><span style="display:inline-block;transform:scaleX(0.76)">Autoset</span></div></div>
<div style="position:absolute;left:1779px;top:416px;width:74px;height:49px;border-radius:8px;background:linear-gradient(#f2f2f3,#dcdcde);border:1.6px solid #a4a4a8;box-shadow:inset 0 0 0 1.3px #45454b,-1px -3px 11px rgba(0,0,30,.45)"><div style="position:absolute;left:-10px;width:91px;top:0.0px;height:23px;text-align:center;font:bold 21px/23px 'Liberation Sans',sans-serif;color:#0c0c0c;-webkit-text-stroke:0.45px #0c0c0c;white-space:nowrap"><span style="display:inline-block;transform:scaleX(0.76)">Touch</span></div><div style="position:absolute;left:-10px;width:91px;top:23.0px;height:23px;text-align:center;font:bold 21px/23px 'Liberation Sans',sans-serif;color:#0c0c0c;-webkit-text-stroke:0.45px #0c0c0c;white-space:nowrap"><span style="display:inline-block;transform:scaleX(0.76)">Lock</span></div></div>
<div style="position:absolute;left:1884px;top:416px;width:74px;height:49px;border-radius:8px;background:linear-gradient(#c9cad1,#a9aab3);border:1.6px solid #a4a4a8;box-shadow:inset 0 0 0 1.3px #45454b,-1px -3px 11px rgba(0,0,30,.45)"><div style="position:absolute;left:-10px;width:91px;top:3.0px;height:20px;text-align:center;font:bold 21px/20px 'Liberation Sans',sans-serif;color:#0c0c0c;-webkit-text-stroke:0.45px #0c0c0c;white-space:nowrap"><span style="display:inline-block;transform:scaleX(0.76)">Clear</span></div><div style="position:absolute;left:-10px;width:91px;top:23.0px;height:20px;text-align:center;font:bold 21px/20px 'Liberation Sans',sans-serif;color:#0c0c0c;-webkit-text-stroke:0.45px #0c0c0c;white-space:nowrap"><span style="display:inline-block;transform:scaleX(0.76)">Screen</span></div></div>
<div style="position:absolute;left:1990px;top:416px;width:74px;height:49px;border-radius:8px;background:linear-gradient(#43b3a0,#2f9784);border:1.6px solid #a4a4a8;box-shadow:inset 0 0 0 1.3px #45454b,-1px -3px 11px rgba(0,0,30,.45)"><div style="position:absolute;left:-10px;width:91px;top:13.0px;height:20px;text-align:center;font:bold 21px/20px 'Liberation Sans',sans-serif;color:#0c0c0c;-webkit-text-stroke:0.45px #0c0c0c;white-space:nowrap"><span style="display:inline-block;transform:scaleX(0.76)">Preset</span></div></div>
<div style="position:absolute;left:1768px;top:487px;width:312px;height:4px;background:#f2f2f4;"></div>
<div style="position:absolute;left:1787px;top:500px;font:bold 22px/26px 'Liberation Sans', sans-serif;color:#f4f4f4;white-space:nowrap;transform:scaleX(0.8);transform-origin:0 50%;-webkit-text-stroke:0.35px #f4f4f4;">Analysis</div>
<svg style="position:absolute;left:1800px;top:572px" width="32" height="34"><path d="M26.6 21.6A11.6 11.6 0 1 1 19.5 7.3" fill="none" stroke="#e4e4e6" stroke-width="3.6" stroke-linecap="round"/><path d="M17.2 11.8L21.9 2.2L30.3 11.8Z" fill="#e4e4e6"/></svg>
<div style="position:absolute;left:1875px;top:544px;width:92px;height:92px;border-radius:50%;box-shadow:5px 8px 18px rgba(0,0,35,.7)"></div><svg style="position:absolute;left:1873px;top:542px" width="96" height="96" viewBox="-48 -48 96 96"><defs><linearGradient id="kg6" x1="0" y1="0" x2="0" y2="1"><stop offset="0" stop-color="#b2b2ba"/><stop offset="1" stop-color="#6c6c74"/></linearGradient><linearGradient id="ko6" x1="0" y1="0" x2="0" y2="1"><stop offset="0" stop-color="#5c5c64"/><stop offset="1" stop-color="#2a2a30"/></linearGradient><radialGradient id="kb6" cx="45%" cy="35%" r="70%"><stop offset="0" stop-color="#b8b8c0"/><stop offset="1" stop-color="#a2a2aa"/></radialGradient><radialGradient id="kr6" cx="50%" cy="35%" r="65%"><stop offset="0" stop-color="#f6f6f7"/><stop offset=".7" stop-color="#e2e2e5"/><stop offset="1" stop-color="#c9c9ce"/></radialGradient></defs><circle r="46" fill="url(#ko6)"/><circle r="44.4" fill="url(#kg6)"/><circle r="41.2" fill="url(#kb6)"/><circle cx="27.1" cy="-32.3" r="2.5" fill="#5c5c64"/><circle cx="-14.4" cy="-39.7" r="2.5" fill="#5c5c64"/><circle cx="-41.6" cy="-7.3" r="2.5" fill="#5c5c64"/><circle cx="-27.1" cy="32.3" r="2.5" fill="#5c5c64"/><circle cx="14.4" cy="39.7" r="2.5" fill="#5c5c64"/><circle cx="41.6" cy="7.3" r="2.5" fill="#5c5c64"/><circle r="34.0" fill="#b9b9c1"/></svg>
<svg style="position:absolute;left:1871px;top:626px" width="18" height="17"><g fill="#e8e8ea"><path d="M5.5 0H10.8V2.4L15.2 2.6L8.2 7.4L1.2 2.6L5.5 2.4Z"/><path d="M4.6 8.4H11.6L13 14.4H3.2Z"/><rect x="0" y="14.2" width="16.4" height="2"/></g></svg>
<div style="position:absolute;left:1968px;top:615px;font:bold 12px/14px 'Liberation Sans', sans-serif;color:#f0f0f0;white-space:nowrap;transform:scaleX(0.8);transform-origin:0 50%;">Push</div>
<div style="position:absolute;left:1952px;top:629px;font:bold 12px/14px 'Liberation Sans', sans-serif;color:#f0f0f0;white-space:nowrap;transform:scaleX(0.8);transform-origin:0 50%;">to Select</div>
<div style="position:absolute;left:1779px;top:661px;width:74px;height:49px;border-radius:8px;background:linear-gradient(#c9cad1,#a9aab3);border:1.6px solid #a4a4a8;box-shadow:inset 0 0 0 1.3px #45454b,-1px -3px 11px rgba(0,0,30,.45)"><div style="position:absolute;left:-10px;width:91px;top:13.0px;height:20px;text-align:center;font:bold 21px/20px 'Liberation Sans',sans-serif;color:#0c0c0c;-webkit-text-stroke:0.45px #0c0c0c;white-space:nowrap"><span style="display:inline-block;transform:scaleX(0.76)">Cursor</span></div></div>
<div style="position:absolute;left:1884px;top:661px;width:74px;height:49px;border-radius:8px;background:linear-gradient(#c9cad1,#a9aab3);border:1.6px solid #a4a4a8;box-shadow:inset 0 0 0 1.3px #45454b,-1px -3px 11px rgba(0,0,30,.45)"><div style="position:absolute;left:-10px;width:91px;top:13.0px;height:20px;text-align:center;font:bold 21px/20px 'Liberation Sans',sans-serif;color:#0c0c0c;-webkit-text-stroke:0.45px #0c0c0c;white-space:nowrap"><span style="display:inline-block;transform:scaleX(0.76)">Meas</span></div></div>
<div style="position:absolute;left:1990px;top:661px;width:74px;height:49px;border-radius:8px;background:linear-gradient(#c9cad1,#a9aab3);border:1.6px solid #a4a4a8;box-shadow:inset 0 0 0 1.3px #45454b,-1px -3px 11px rgba(0,0,30,.45)"></div>
<svg style="position:absolute;left:2007px;top:665px" width="40" height="40" viewBox="-20 -20 40 40"><g stroke="#0a0a0a" stroke-width="2.1"><path d="M0 -10.5V-15.5" transform="rotate(0)"/><path d="M0 -10.5V-15.5" transform="rotate(30)"/><path d="M0 -10.5V-15.5" transform="rotate(60)"/><path d="M0 -10.5V-15.5" transform="rotate(90)"/><path d="M0 -10.5V-15.5" transform="rotate(120)"/><path d="M0 -10.5V-15.5" transform="rotate(150)"/><path d="M0 -10.5V-15.5" transform="rotate(180)"/><path d="M0 -10.5V-15.5" transform="rotate(210)"/><path d="M0 -10.5V-15.5" transform="rotate(240)"/><path d="M0 -10.5V-15.5" transform="rotate(270)"/><path d="M0 -10.5V-15.5" transform="rotate(300)"/><path d="M0 -10.5V-15.5" transform="rotate(330)"/></g><circle r="7" fill="none" stroke="#0a0a0a" stroke-width="2"/><path d="M5 -5A7 7 0 0 1 -5 5Z" fill="#0a0a0a"/></svg>
<div style="position:absolute;left:1779px;top:734px;width:74px;height:49px;border-radius:8px;background:linear-gradient(#c9cad1,#a9aab3);border:1.6px solid #a4a4a8;box-shadow:inset 0 0 0 1.3px #45454b,-1px -3px 11px rgba(0,0,30,.45)"><div style="position:absolute;left:-10px;width:91px;top:0.0px;height:23px;text-align:center;font:bold 21px/23px 'Liberation Sans',sans-serif;color:#0c0c0c;-webkit-text-stroke:0.45px #0c0c0c;white-space:nowrap"><span style="display:inline-block;transform:scaleX(0.76)">Quick</span></div><div style="position:absolute;left:-10px;width:91px;top:23.0px;height:23px;text-align:center;font:bold 21px/23px 'Liberation Sans',sans-serif;color:#0c0c0c;-webkit-text-stroke:0.45px #0c0c0c;white-space:nowrap"><span style="display:inline-block;transform:scaleX(0.76)">Meas</span></div></div>
<div style="position:absolute;left:1884px;top:734px;width:74px;height:49px;border-radius:8px;background:linear-gradient(#c9cad1,#a9aab3);border:1.6px solid #a4a4a8;box-shadow:inset 0 0 0 1.3px #45454b,-1px -3px 11px rgba(0,0,30,.45)"><div style="position:absolute;left:-10px;width:91px;top:13.0px;height:20px;text-align:center;font:bold 21px/20px 'Liberation Sans',sans-serif;color:#0c0c0c;-webkit-text-stroke:0.45px #0c0c0c;white-space:nowrap"><span style="display:inline-block;transform:scaleX(0.76)">Search</span></div></div>
<div style="position:absolute;left:1990px;top:734px;width:74px;height:49px;border-radius:8px;background:linear-gradient(#c9cad1,#a9aab3);border:1.6px solid #a4a4a8;box-shadow:inset 0 0 0 1.3px #45454b,-1px -3px 11px rgba(0,0,30,.45)"><div style="position:absolute;left:-10px;width:91px;top:13.0px;height:20px;text-align:center;font:bold 21px/20px 'Liberation Sans',sans-serif;color:#0c0c0c;-webkit-text-stroke:0.45px #0c0c0c;white-space:nowrap"><span style="display:inline-block;transform:scaleX(0.76)">FFT</span></div></div>
<div style="position:absolute;left:1779px;top:807px;width:74px;height:49px;border-radius:8px;background:linear-gradient(#f2f2f3,#dcdcde);border:1.6px solid #a4a4a8;box-shadow:inset 0 0 0 1.3px #45454b,-1px -3px 11px rgba(0,0,30,.45)"><div style="position:absolute;left:-10px;width:91px;top:13.0px;height:20px;text-align:center;font:bold 21px/20px 'Liberation Sans',sans-serif;color:#0c0c0c;-webkit-text-stroke:0.45px #0c0c0c;white-space:nowrap"><span style="display:inline-block;transform:scaleX(0.67)">Protocol</span></div></div>
<div style="position:absolute;left:1884px;top:807px;width:74px;height:49px;border-radius:8px;background:linear-gradient(#f2f2f3,#dcdcde);border:1.6px solid #a4a4a8;box-shadow:inset 0 0 0 1.3px #45454b,-1px -3px 11px rgba(0,0,30,.45)"><div style="position:absolute;left:-10px;width:91px;top:13.0px;height:20px;text-align:center;font:bold 21px/20px 'Liberation Sans',sans-serif;color:#0c0c0c;-webkit-text-stroke:0.45px #0c0c0c;white-space:nowrap"><span style="display:inline-block;transform:scaleX(0.76)">Gen</span></div></div>
<div style="position:absolute;left:1990px;top:807px;width:74px;height:49px;border-radius:8px;background:linear-gradient(#c9cad1,#a9aab3);border:1.6px solid #a4a4a8;box-shadow:inset 0 0 0 1.3px #45454b,-1px -3px 11px rgba(0,0,30,.45)"></div>
<svg style="position:absolute;left:2004px;top:818px" width="46" height="28"><g fill="#0a0a0a"><rect x="1" y="1" width="12" height="11" rx="1"/><rect x="1" y="17" width="12" height="11" rx="1"/><rect x="17" y="1" width="12" height="11" rx="1"/><rect x="17" y="17" width="12" height="11" rx="1"/><rect x="33" y="1" width="12" height="11" rx="1"/><rect x="33" y="17" width="12" height="11" rx="1"/></g></svg>
</body></html>
